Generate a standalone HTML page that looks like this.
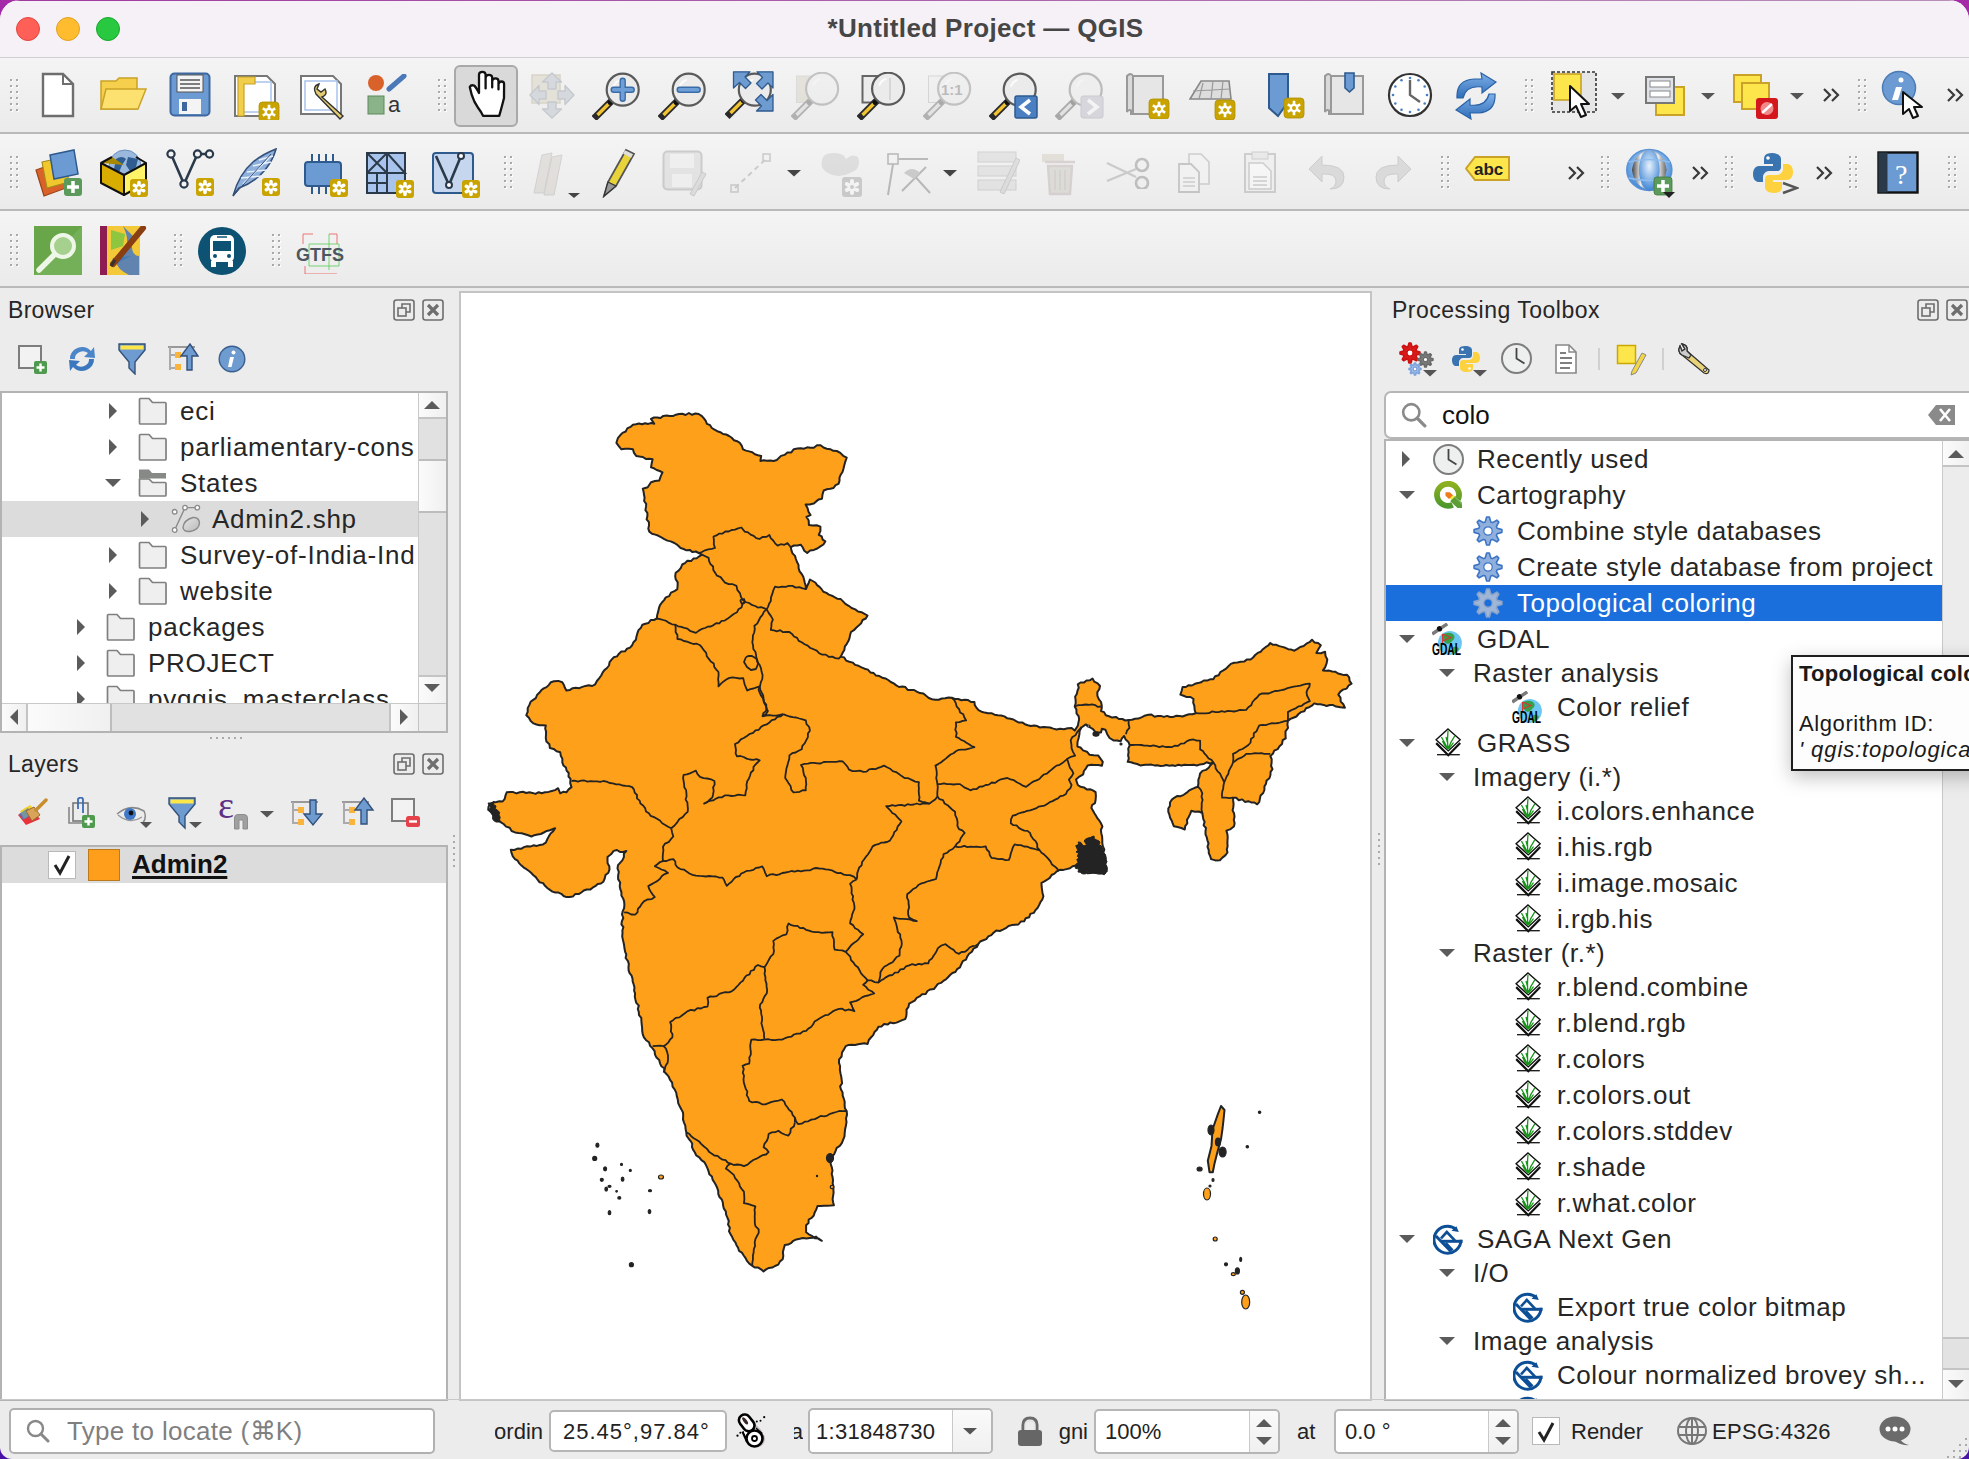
<!DOCTYPE html><html><head><meta charset="utf-8"><style>
*{margin:0;padding:0;box-sizing:border-box}
html,body{width:1969px;height:1459px;overflow:hidden;background:linear-gradient(180deg,#a52aa8 0,#8a1fb0 40%,#4a12a8 100%);font-family:"Liberation Sans",sans-serif;color:#222}
.a{position:absolute}
#win{position:absolute;left:0;top:0;width:1969px;height:1459px;background:#ececec;border-radius:20px 20px 12px 12px;overflow:hidden}
#title{position:absolute;left:0;top:0;width:1969px;height:58px;background:#f6f1f6;border-bottom:1px solid #d0d0d0}
#title .t{position:absolute;left:0;width:1969px;top:13px;text-align:center;font-weight:bold;font-size:26px;color:#464646;letter-spacing:0.35px;padding-left:2px}
.tl{position:absolute;top:17px;width:24px;height:24px;border-radius:50%}
.tb{position:absolute;left:0;width:1969px;background:linear-gradient(#f4f4f4,#ebebeb);border-bottom:2px solid #b9b9b9}
.grip{position:absolute;width:10px;height:36px;background-image:radial-gradient(circle,#c4c4c4 1.4px,transparent 1.8px);background-size:7px 6px}
.t26{position:absolute;white-space:nowrap;font-size:26px;letter-spacing:0.55px;color:#262626;line-height:36px;height:36px}
.t22{position:absolute;white-space:nowrap;font-size:22px;color:#262626;line-height:30px}
.box{position:absolute;background:#fff;border:2px solid #b3b3b3}
.sb{position:absolute;background:linear-gradient(90deg,#fbfbfb,#f0f0f0)}
</style></head><body><div id="win"><div id="title"><div class="t">*Untitled Project — QGIS</div><div class="tl" style="left:16px;background:#fe5f57;border:1px solid #e1463f"></div><div class="tl" style="left:56px;background:#febc2e;border:1px solid #e0a023"></div><div class="tl" style="left:96px;background:#28c840;border:1px solid #16a82c"></div></div><div class="tb" style="top:58px;height:76px"></div><div class="tb" style="top:134px;height:77px"></div><div class="tb" style="top:211px;height:77px"></div><svg class="a" style="left:9px;top:78px" width="12" height="36"><rect x="2" y="2" width="2" height="2" fill="#fff"/><rect x="1" y="1" width="2" height="2" fill="#a9a9a9"/><rect x="8" y="2" width="2" height="2" fill="#fff"/><rect x="7" y="1" width="2" height="2" fill="#a9a9a9"/><rect x="2" y="8" width="2" height="2" fill="#fff"/><rect x="1" y="7" width="2" height="2" fill="#a9a9a9"/><rect x="8" y="8" width="2" height="2" fill="#fff"/><rect x="7" y="7" width="2" height="2" fill="#a9a9a9"/><rect x="2" y="14" width="2" height="2" fill="#fff"/><rect x="1" y="13" width="2" height="2" fill="#a9a9a9"/><rect x="8" y="14" width="2" height="2" fill="#fff"/><rect x="7" y="13" width="2" height="2" fill="#a9a9a9"/><rect x="2" y="20" width="2" height="2" fill="#fff"/><rect x="1" y="19" width="2" height="2" fill="#a9a9a9"/><rect x="8" y="20" width="2" height="2" fill="#fff"/><rect x="7" y="19" width="2" height="2" fill="#a9a9a9"/><rect x="2" y="26" width="2" height="2" fill="#fff"/><rect x="1" y="25" width="2" height="2" fill="#a9a9a9"/><rect x="8" y="26" width="2" height="2" fill="#fff"/><rect x="7" y="25" width="2" height="2" fill="#a9a9a9"/><rect x="2" y="32" width="2" height="2" fill="#fff"/><rect x="1" y="31" width="2" height="2" fill="#a9a9a9"/><rect x="8" y="32" width="2" height="2" fill="#fff"/><rect x="7" y="31" width="2" height="2" fill="#a9a9a9"/></svg><svg class="a" style="left:41px;top:72px" width="34" height="46" viewBox="0 0 34 46"><path d="M2 2 H22 L32 12 V44 H2 Z" fill="#fff" stroke="#6e6e6e" stroke-width="2.4"/><path d="M22 2 V12 H32" fill="none" stroke="#6e6e6e" stroke-width="2"/></svg><svg class="a" style="left:100px;top:75px" width="48" height="38" viewBox="0 0 48 38"><path d="M1 6 H16 L19 3 H37 V34 H1 Z" fill="#f6d04d" stroke="#c9a227" stroke-width="1.5"/><path d="M6 14 H46 L38 34 H1 Z" fill="#fce070" stroke="#c9a227" stroke-width="1.5"/></svg><svg class="a" style="left:169px;top:72px" width="42" height="45" viewBox="0 0 42 45"><rect x="1.5" y="1.5" width="39" height="42" rx="4" fill="#6b9bd2" stroke="#3d679e" stroke-width="2"/><rect x="8" y="3" width="26" height="17" fill="#f4f4f4" stroke="#555" stroke-width="1"/><path d="M11 8 H31 M11 12 H31 M11 16 H31" stroke="#555" stroke-width="1.5"/><rect x="10" y="27" width="22" height="15" fill="#f4f4f4"/><rect x="13" y="30" width="5" height="9" fill="#3d679e"/></svg><svg class="a" style="left:233px;top:74px" width="48" height="46" viewBox="0 0 48 46"><path d="M2 2 H34 L42 10 V42 H2 Z" fill="#fff" stroke="#777" stroke-width="2"/><rect x="6" y="8" width="32" height="30" fill="none" stroke="#a9c4ec" stroke-width="1.5"/><path d="M5 3 H22 V10 H11 V42 H5 Z" fill="#f2cf4a" stroke="#c9a227" stroke-width="1.2"/><rect x="26.0" y="28.0" width="20" height="20" rx="3.5" fill="#c9a400" stroke="#b08f00" stroke-width="0.8"/><path d="M36.0 38.0 L42.2 41.6 M36.0 38.0 L36.0 45.2 M36.0 38.0 L29.8 41.6 M36.0 38.0 L29.8 34.4 M36.0 38.0 L36.0 30.8 M36.0 38.0 L42.2 34.4 " stroke="#fff" stroke-width="2.6"/><circle cx="36" cy="38" r="4.4" fill="#fff"/><circle cx="36" cy="38" r="2.0" fill="#c9a400"/></svg><svg class="a" style="left:299px;top:74px" width="48" height="46" viewBox="0 0 48 46"><path d="M2 2 H34 L42 10 V40 H2 Z" fill="#fff" stroke="#777" stroke-width="2"/><rect x="6" y="7" width="32" height="29" fill="none" stroke="#a9c4ec" stroke-width="1.5"/><path d="M17 20 Q13 12 20 10 L18 15 L22 18 L26 15 Q29 21 23 23 L44 42 L41 45 Z" fill="#e3cb72" stroke="#333" stroke-width="1.4"/></svg><svg class="a" style="left:366px;top:74px" width="44" height="42" viewBox="0 0 44 42"><circle cx="10" cy="9" r="8" fill="#d9622b"/><path d="M23 15 L38 2" stroke="#4a78b8" stroke-width="5" stroke-linecap="round"/><rect x="2" y="22" width="16" height="18" fill="#8ab38a" stroke="#5c8a5c" stroke-width="1"/><text x="22" y="38" font-family="Liberation Sans" font-size="22" fill="#333">a</text></svg><svg class="a" style="left:437px;top:78px" width="12" height="36"><rect x="2" y="2" width="2" height="2" fill="#fff"/><rect x="1" y="1" width="2" height="2" fill="#a9a9a9"/><rect x="8" y="2" width="2" height="2" fill="#fff"/><rect x="7" y="1" width="2" height="2" fill="#a9a9a9"/><rect x="2" y="8" width="2" height="2" fill="#fff"/><rect x="1" y="7" width="2" height="2" fill="#a9a9a9"/><rect x="8" y="8" width="2" height="2" fill="#fff"/><rect x="7" y="7" width="2" height="2" fill="#a9a9a9"/><rect x="2" y="14" width="2" height="2" fill="#fff"/><rect x="1" y="13" width="2" height="2" fill="#a9a9a9"/><rect x="8" y="14" width="2" height="2" fill="#fff"/><rect x="7" y="13" width="2" height="2" fill="#a9a9a9"/><rect x="2" y="20" width="2" height="2" fill="#fff"/><rect x="1" y="19" width="2" height="2" fill="#a9a9a9"/><rect x="8" y="20" width="2" height="2" fill="#fff"/><rect x="7" y="19" width="2" height="2" fill="#a9a9a9"/><rect x="2" y="26" width="2" height="2" fill="#fff"/><rect x="1" y="25" width="2" height="2" fill="#a9a9a9"/><rect x="8" y="26" width="2" height="2" fill="#fff"/><rect x="7" y="25" width="2" height="2" fill="#a9a9a9"/><rect x="2" y="32" width="2" height="2" fill="#fff"/><rect x="1" y="31" width="2" height="2" fill="#a9a9a9"/><rect x="8" y="32" width="2" height="2" fill="#fff"/><rect x="7" y="31" width="2" height="2" fill="#a9a9a9"/></svg><div class="a" style="left:454px;top:65px;width:64px;height:62px;border-radius:6px;background:#d9d9d9;border:2px solid #a9a9a9"></div><svg class="a" style="left:463px;top:70px" width="46" height="50" viewBox="0 0 46 50"><path d="M20 45.8 L36.2 45.8 Q38 40 41 28 L41.1 14 Q41 11.5 38.5 11.5 Q36 11.5 35.5 14 L35.5 19.4 L35.5 11 Q35.5 8.3 32.5 8.3 Q29.5 8.3 29.2 11 L29.2 17.4 L29.2 7.5 Q29 4.8 26 4.8 Q23 4.8 22.6 7.5 L22.6 18.4 L22.6 4.5 Q22.5 1.8 19.3 1.8 Q16.2 1.8 16 4.5 L16 23 Q13 17 11 15.5 Q8 14.5 6.8 17 Q8 24 11.4 31.6 Q15 38 18 42 Z" fill="#fff" stroke="#111" stroke-width="2.3" stroke-linejoin="round"/></svg><svg class="a" style="left:528px;top:71px" width="50" height="50" viewBox="0 0 50 50"><rect x="4" y="4" width="28" height="28" fill="#e4e1d8" stroke="#d8d4c8" stroke-width="1.5"/><g fill="#d5d9dd" stroke="#c5c9cd" stroke-width="1.4" stroke-linejoin="round"><path d="M24 2 L33.5 11 H28 V18 H20 V11 H14.5 Z"/><path d="M24 47 L33.5 38 H28 V31 H20 V38 H14.5 Z"/><path d="M2 24 L11 14.5 V20 H18 V28 H11 V33.5 Z"/><path d="M46 24 L37 14.5 V20 H30 V28 H37 V33.5 Z"/></g></svg><svg class="a" style="left:592px;top:72px" width="50" height="48" viewBox="0 0 50 48"><path d="M4.5 44 L18 30.5" stroke="#2a2a2a" stroke-width="7" stroke-linecap="square"/><path d="M5.5 43 L16.5 32" stroke="#f1c232" stroke-width="3.4"/><circle cx="18" cy="30.5" r="2.4" fill="#111"/><circle cx="30.7" cy="17.7" r="16" fill="#ebebeb" stroke="#5a5a5a" stroke-width="2.2"/><path d="M21.7 14.7 A11 11 0 0 1 28.7 7.699999999999999" stroke="#fff" stroke-width="2" fill="none" opacity="0.8"/><path d="M21.7 17.7 H39.7 M30.7 8.7 V26.7" stroke="#3b6ca8" stroke-width="6.4" stroke-linecap="round"/><path d="M21.7 17.7 H39.7 M30.7 8.7 V26.7" stroke="#6e9fd6" stroke-width="3.6" stroke-linecap="round"/></svg><svg class="a" style="left:658px;top:72px" width="50" height="48" viewBox="0 0 50 48"><path d="M4.5 44 L18 30.5" stroke="#2a2a2a" stroke-width="7" stroke-linecap="square"/><path d="M5.5 43 L16.5 32" stroke="#f1c232" stroke-width="3.4"/><circle cx="18" cy="30.5" r="2.4" fill="#111"/><circle cx="30.7" cy="17.7" r="16" fill="#ebebeb" stroke="#5a5a5a" stroke-width="2.2"/><path d="M21.7 14.7 A11 11 0 0 1 28.7 7.699999999999999" stroke="#fff" stroke-width="2" fill="none" opacity="0.8"/><path d="M21.7 17.7 H39.7" stroke="#3b6ca8" stroke-width="6.4" stroke-linecap="round"/><path d="M21.7 17.7 H39.7" stroke="#6e9fd6" stroke-width="3.6" stroke-linecap="round"/></svg><svg class="a" style="left:725px;top:70px" width="50" height="50" viewBox="0 0 50 50"><path d="M4.5 44 L18 30.5" stroke="#2a2a2a" stroke-width="7" stroke-linecap="square"/><path d="M5.5 43 L16.5 32" stroke="#f1c232" stroke-width="3.4"/><circle cx="18" cy="30.5" r="2.4" fill="#111"/><circle cx="29.8" cy="19.7" r="16" fill="#ebebeb" stroke="#5a5a5a" stroke-width="2.2"/><path d="M20.8 16.7 A11 11 0 0 1 27.8 9.7" stroke="#fff" stroke-width="2" fill="none" opacity="0.8"/><g fill="#6e9bd0" stroke="#2e5a8e" stroke-width="1.3" stroke-linejoin="round"><path d="M8.5 1.8 H25 L20 7 L26 13 L20.5 18.5 L14.5 12.5 L8.5 18 Z"/><path d="M48 1.8 V18 L43 13 L37 19 L31.5 13.5 L37.5 7.5 L32 1.8 Z"/><path d="M48 41 H31.5 L36.5 36 L30.5 30 L36 24.5 L42 30.5 L48 24.5 Z"/></g></svg><svg class="a" style="left:791px;top:72px" width="50" height="48" viewBox="0 0 50 48"><g opacity="0.3"><rect x="5.5" y="4" width="26.5" height="26.5" fill="#c7c2a6" stroke="#aaa"/><path d="M4.5 44 L18 30.5" stroke="#2a2a2a" stroke-width="7" stroke-linecap="square"/><path d="M5.5 43 L16.5 32" stroke="#ccc" stroke-width="3.4"/><circle cx="18" cy="30.5" r="2.4" fill="#111"/><circle cx="31.1" cy="16.7" r="16" fill="#ebebeb" stroke="#5a5a5a" stroke-width="2.2"/><path d="M22.1 13.7 A11 11 0 0 1 29.1 6.699999999999999" stroke="#fff" stroke-width="2" fill="none" opacity="0.8"/></g></svg><svg class="a" style="left:857px;top:72px" width="50" height="48" viewBox="0 0 50 48"><rect x="5.5" y="4" width="26.5" height="26.5" fill="#ececec" stroke="#666" stroke-width="2"/><path d="M4.5 44 L18 30.5" stroke="#2a2a2a" stroke-width="7" stroke-linecap="square"/><path d="M5.5 43 L16.5 32" stroke="#f1c232" stroke-width="3.4"/><circle cx="18" cy="30.5" r="2.4" fill="#111"/><circle cx="31.1" cy="16.7" r="16" fill="#ebebeb" stroke="#5a5a5a" stroke-width="2.2"/><path d="M22.1 13.7 A11 11 0 0 1 29.1 6.699999999999999" stroke="#fff" stroke-width="2" fill="none" opacity="0.8"/><path d="M33 6 V28" stroke="#cfcfcf" stroke-width="1.5"/></svg><svg class="a" style="left:923px;top:72px" width="50" height="48" viewBox="0 0 50 48"><g opacity="0.3"><rect x="5.5" y="4" width="26.5" height="26.5" fill="#eee" stroke="#999"/><path d="M4.5 44 L18 30.5" stroke="#2a2a2a" stroke-width="7" stroke-linecap="square"/><path d="M5.5 43 L16.5 32" stroke="#ccc" stroke-width="3.4"/><circle cx="18" cy="30.5" r="2.4" fill="#111"/><circle cx="31.1" cy="16.7" r="16" fill="#ebebeb" stroke="#5a5a5a" stroke-width="2.2"/><path d="M22.1 13.7 A11 11 0 0 1 29.1 6.699999999999999" stroke="#fff" stroke-width="2" fill="none" opacity="0.8"/><text x="18" y="23" font-family="Liberation Sans" font-weight="bold" font-size="15" fill="#444">1:1</text></g></svg><svg class="a" style="left:989px;top:72px" width="50" height="48" viewBox="0 0 50 48"><path d="M4.5 44 L18 30.5" stroke="#2a2a2a" stroke-width="7" stroke-linecap="square"/><path d="M5.5 43 L16.5 32" stroke="#f1c232" stroke-width="3.4"/><circle cx="18" cy="30.5" r="2.4" fill="#111"/><circle cx="30.7" cy="17.7" r="16" fill="#ebebeb" stroke="#5a5a5a" stroke-width="2.2"/><path d="M21.7 14.7 A11 11 0 0 1 28.7 7.699999999999999" stroke="#fff" stroke-width="2" fill="none" opacity="0.8"/><rect x="26" y="24" width="22" height="22" rx="2" fill="#4a7fc1" stroke="#2e5a8e" stroke-width="1.5"/><path d="M41 28 L32 35 L41 42" fill="none" stroke="#fff" stroke-width="3.5"/></svg><svg class="a" style="left:1055px;top:72px" width="50" height="48" viewBox="0 0 50 48"><g opacity="0.35"><path d="M4.5 44 L18 30.5" stroke="#2a2a2a" stroke-width="7" stroke-linecap="square"/><path d="M5.5 43 L16.5 32" stroke="#ccc" stroke-width="3.4"/><circle cx="18" cy="30.5" r="2.4" fill="#111"/><circle cx="30.7" cy="17.7" r="16" fill="#ebebeb" stroke="#5a5a5a" stroke-width="2.2"/><path d="M21.7 14.7 A11 11 0 0 1 28.7 7.699999999999999" stroke="#fff" stroke-width="2" fill="none" opacity="0.8"/><rect x="26" y="24" width="22" height="22" rx="2" fill="#aab" stroke="#889"/><path d="M33 28 L42 35 L33 42" fill="none" stroke="#fff" stroke-width="3.5"/></g></svg><svg class="a" style="left:1125px;top:72px" width="46" height="47" viewBox="0 0 46 47"><path d="M6 4 H38 V42 H6 Z" fill="#e6e6e6" stroke="#999" stroke-width="2"/><path d="M2 4 Q6 0 8 4 V40 Q4 36 2 40 Z" fill="#d9d9d9" stroke="#999" stroke-width="2"/><rect x="24.0" y="27.0" width="20" height="20" rx="3.5" fill="#c9a400" stroke="#b08f00" stroke-width="0.8"/><path d="M34.0 37.0 L40.2 40.6 M34.0 37.0 L34.0 44.2 M34.0 37.0 L27.8 40.6 M34.0 37.0 L27.8 33.4 M34.0 37.0 L34.0 29.8 M34.0 37.0 L40.2 33.4 " stroke="#fff" stroke-width="2.6"/><circle cx="34" cy="37" r="4.4" fill="#fff"/><circle cx="34" cy="37" r="2.0" fill="#c9a400"/></svg><svg class="a" style="left:1189px;top:75px" width="48" height="45" viewBox="0 0 48 45"><path d="M1 24 L12 6 L40 6 L42 24 Z" fill="#ddd" stroke="#888" stroke-width="1.6"/><path d="M14 8 L10 24 M24 6 L22 24 M34 6 L32 24 M4 16 L41 14" stroke="#999" stroke-width="1.2"/><rect x="26.0" y="25.0" width="20" height="20" rx="3.5" fill="#c9a400" stroke="#b08f00" stroke-width="0.8"/><path d="M36.0 35.0 L42.2 38.6 M36.0 35.0 L36.0 42.2 M36.0 35.0 L29.8 38.6 M36.0 35.0 L29.8 31.4 M36.0 35.0 L36.0 27.8 M36.0 35.0 L42.2 31.4 " stroke="#fff" stroke-width="2.6"/><circle cx="36" cy="35" r="4.4" fill="#fff"/><circle cx="36" cy="35" r="2.0" fill="#c9a400"/></svg><svg class="a" style="left:1266px;top:72px" width="40" height="47" viewBox="0 0 40 47"><path d="M3 2 H22 V30 L12 44 L3 36 Z" fill="#6b9bd2" stroke="#2e5a8e" stroke-width="2"/><rect x="18.0" y="26.0" width="20" height="20" rx="3.5" fill="#c9a400" stroke="#b08f00" stroke-width="0.8"/><path d="M28.0 36.0 L34.2 39.6 M28.0 36.0 L28.0 43.2 M28.0 36.0 L21.8 39.6 M28.0 36.0 L21.8 32.4 M28.0 36.0 L28.0 28.8 M28.0 36.0 L34.2 32.4 " stroke="#fff" stroke-width="2.6"/><circle cx="28" cy="36" r="4.4" fill="#fff"/><circle cx="28" cy="36" r="2.0" fill="#c9a400"/></svg><svg class="a" style="left:1323px;top:72px" width="44" height="47" viewBox="0 0 44 47"><path d="M6 4 H40 V42 H6 Z" fill="#e6e6e6" stroke="#999" stroke-width="2"/><path d="M2 4 Q6 0 8 4 V40 Q4 36 2 40 Z" fill="#d9d9d9" stroke="#999" stroke-width="2"/><path d="M22 1 H31 V16 L26.5 20 L22 16 Z" fill="#6b9bd2" stroke="#2e5a8e" stroke-width="1.6"/></svg><svg class="a" style="left:1387px;top:72px" width="46" height="46" viewBox="0 0 46 46"><circle cx="23" cy="23" r="21" fill="#fff" stroke="#333" stroke-width="2.2"/><circle cx="40.0" cy="23.0" r="1.3" fill="#4a7fc1"/><circle cx="37.7" cy="31.5" r="1.3" fill="#4a7fc1"/><circle cx="31.5" cy="37.7" r="1.3" fill="#4a7fc1"/><circle cx="23.0" cy="40.0" r="1.3" fill="#4a7fc1"/><circle cx="14.5" cy="37.7" r="1.3" fill="#4a7fc1"/><circle cx="8.3" cy="31.5" r="1.3" fill="#4a7fc1"/><circle cx="6.0" cy="23.0" r="1.3" fill="#4a7fc1"/><circle cx="8.3" cy="14.5" r="1.3" fill="#4a7fc1"/><circle cx="14.5" cy="8.3" r="1.3" fill="#4a7fc1"/><circle cx="23.0" cy="6.0" r="1.3" fill="#4a7fc1"/><circle cx="31.5" cy="8.3" r="1.3" fill="#4a7fc1"/><circle cx="37.7" cy="14.5" r="1.3" fill="#4a7fc1"/><path d="M23 8 V23 L33 30" fill="none" stroke="#666" stroke-width="2.4"/></svg><svg class="a" style="left:1454px;top:72px" width="44" height="48" viewBox="0 0 44 48"><defs><linearGradient id="rf" x1="0" y1="0" x2="0" y2="1"><stop offset="0" stop-color="#7fb0e8"/><stop offset="1" stop-color="#2f6db8"/></linearGradient></defs><path d="M3 26 Q2 8 20 7 L28 7 L27 1 L42 10 L28 21 L28 15 Q12 13 9 26 Z" fill="url(#rf)" stroke="#2a63a8" stroke-width="1.2"/><path d="M41 22 Q42 40 24 41 L16 41 L17 47 L2 38 L16 27 L16 33 Q32 35 35 22 Z" fill="url(#rf)" stroke="#2a63a8" stroke-width="1.2"/></svg><svg class="a" style="left:1524px;top:78px" width="12" height="36"><rect x="2" y="2" width="2" height="2" fill="#fff"/><rect x="1" y="1" width="2" height="2" fill="#a9a9a9"/><rect x="8" y="2" width="2" height="2" fill="#fff"/><rect x="7" y="1" width="2" height="2" fill="#a9a9a9"/><rect x="2" y="8" width="2" height="2" fill="#fff"/><rect x="1" y="7" width="2" height="2" fill="#a9a9a9"/><rect x="8" y="8" width="2" height="2" fill="#fff"/><rect x="7" y="7" width="2" height="2" fill="#a9a9a9"/><rect x="2" y="14" width="2" height="2" fill="#fff"/><rect x="1" y="13" width="2" height="2" fill="#a9a9a9"/><rect x="8" y="14" width="2" height="2" fill="#fff"/><rect x="7" y="13" width="2" height="2" fill="#a9a9a9"/><rect x="2" y="20" width="2" height="2" fill="#fff"/><rect x="1" y="19" width="2" height="2" fill="#a9a9a9"/><rect x="8" y="20" width="2" height="2" fill="#fff"/><rect x="7" y="19" width="2" height="2" fill="#a9a9a9"/><rect x="2" y="26" width="2" height="2" fill="#fff"/><rect x="1" y="25" width="2" height="2" fill="#a9a9a9"/><rect x="8" y="26" width="2" height="2" fill="#fff"/><rect x="7" y="25" width="2" height="2" fill="#a9a9a9"/><rect x="2" y="32" width="2" height="2" fill="#fff"/><rect x="1" y="31" width="2" height="2" fill="#a9a9a9"/><rect x="8" y="32" width="2" height="2" fill="#fff"/><rect x="7" y="31" width="2" height="2" fill="#a9a9a9"/></svg><svg class="a" style="left:1551px;top:71px" width="50" height="50" viewBox="0 0 50 50"><rect x="1" y="1" width="44" height="40" fill="#e6e6e6" stroke="#333" stroke-width="1.6" stroke-dasharray="3 2"/><rect x="3" y="3" width="27" height="26" fill="#fde54c" stroke="#c9a227" stroke-width="1.6"/><path d="M19 15 L19 40 L25 35 L30 46 L35 44 L30 33 L38 33 Z" fill="#fff" stroke="#111" stroke-width="2" stroke-linejoin="round"/></svg><svg class="a" style="left:1610px;top:92px" width="16" height="8" viewBox="0 0 16 8"><path d="M1 1 L15 1 L8 7.5 Z" fill="#555"/></svg><svg class="a" style="left:1644px;top:75px" width="42" height="42" viewBox="0 0 42 42"><rect x="12" y="12" width="28" height="28" fill="#fde54c" stroke="#c9a227" stroke-width="2"/><rect x="2" y="2" width="28" height="26" fill="#dfe3e8" stroke="#777" stroke-width="2"/><rect x="6" y="6" width="20" height="6" fill="#fff" stroke="#888"/><rect x="6" y="16" width="20" height="6" fill="#fff" stroke="#888"/></svg><svg class="a" style="left:1700px;top:92px" width="16" height="8" viewBox="0 0 16 8"><path d="M1 1 L15 1 L8 7.5 Z" fill="#555"/></svg><svg class="a" style="left:1732px;top:73px" width="48" height="47" viewBox="0 0 48 47"><rect x="2" y="2" width="27" height="27" fill="#fde54c" stroke="#c9a227" stroke-width="2"/><rect x="10" y="10" width="27" height="26" fill="#fde54c" stroke="#c9a227" stroke-width="2"/><rect x="24" y="25" width="22" height="21" rx="3" fill="#d4171c"/><circle cx="35" cy="35.5" r="6.5" fill="#f08a8a"/><path d="M30 40 L40 31" stroke="#fff" stroke-width="2.5"/></svg><svg class="a" style="left:1789px;top:92px" width="16" height="8" viewBox="0 0 16 8"><path d="M1 1 L15 1 L8 7.5 Z" fill="#555"/></svg><svg class="a" style="left:1822px;top:88px" width="18" height="14" viewBox="0 0 18 14"><path d="M2 1 L8 7 L2 13 M10 1 L16 7 L10 13" fill="none" stroke="#3a3a3a" stroke-width="2.2"/></svg><svg class="a" style="left:1857px;top:78px" width="12" height="36"><rect x="2" y="2" width="2" height="2" fill="#fff"/><rect x="1" y="1" width="2" height="2" fill="#a9a9a9"/><rect x="8" y="2" width="2" height="2" fill="#fff"/><rect x="7" y="1" width="2" height="2" fill="#a9a9a9"/><rect x="2" y="8" width="2" height="2" fill="#fff"/><rect x="1" y="7" width="2" height="2" fill="#a9a9a9"/><rect x="8" y="8" width="2" height="2" fill="#fff"/><rect x="7" y="7" width="2" height="2" fill="#a9a9a9"/><rect x="2" y="14" width="2" height="2" fill="#fff"/><rect x="1" y="13" width="2" height="2" fill="#a9a9a9"/><rect x="8" y="14" width="2" height="2" fill="#fff"/><rect x="7" y="13" width="2" height="2" fill="#a9a9a9"/><rect x="2" y="20" width="2" height="2" fill="#fff"/><rect x="1" y="19" width="2" height="2" fill="#a9a9a9"/><rect x="8" y="20" width="2" height="2" fill="#fff"/><rect x="7" y="19" width="2" height="2" fill="#a9a9a9"/><rect x="2" y="26" width="2" height="2" fill="#fff"/><rect x="1" y="25" width="2" height="2" fill="#a9a9a9"/><rect x="8" y="26" width="2" height="2" fill="#fff"/><rect x="7" y="25" width="2" height="2" fill="#a9a9a9"/><rect x="2" y="32" width="2" height="2" fill="#fff"/><rect x="1" y="31" width="2" height="2" fill="#a9a9a9"/><rect x="8" y="32" width="2" height="2" fill="#fff"/><rect x="7" y="31" width="2" height="2" fill="#a9a9a9"/></svg><svg class="a" style="left:1881px;top:70px" width="50" height="50" viewBox="0 0 50 50"><circle cx="18" cy="18" r="16.5" fill="#6b9bd2" stroke="#4d7bb6" stroke-width="1.5"/><path d="M15 17 H21 L17 30 H11 Z" fill="#fff"/><circle cx="20" cy="10" r="2.5" fill="#fff"/><path d="M22 22 L22 44 L28 39 L32 48 L37 46 L33 37 L41 37 Z" fill="#fff" stroke="#111" stroke-width="2" stroke-linejoin="round"/></svg><svg class="a" style="left:1946px;top:88px" width="18" height="14" viewBox="0 0 18 14"><path d="M2 1 L8 7 L2 13 M10 1 L16 7 L10 13" fill="none" stroke="#3a3a3a" stroke-width="2.2"/></svg><svg class="a" style="left:9px;top:155px" width="12" height="36"><rect x="2" y="2" width="2" height="2" fill="#fff"/><rect x="1" y="1" width="2" height="2" fill="#a9a9a9"/><rect x="8" y="2" width="2" height="2" fill="#fff"/><rect x="7" y="1" width="2" height="2" fill="#a9a9a9"/><rect x="2" y="8" width="2" height="2" fill="#fff"/><rect x="1" y="7" width="2" height="2" fill="#a9a9a9"/><rect x="8" y="8" width="2" height="2" fill="#fff"/><rect x="7" y="7" width="2" height="2" fill="#a9a9a9"/><rect x="2" y="14" width="2" height="2" fill="#fff"/><rect x="1" y="13" width="2" height="2" fill="#a9a9a9"/><rect x="8" y="14" width="2" height="2" fill="#fff"/><rect x="7" y="13" width="2" height="2" fill="#a9a9a9"/><rect x="2" y="20" width="2" height="2" fill="#fff"/><rect x="1" y="19" width="2" height="2" fill="#a9a9a9"/><rect x="8" y="20" width="2" height="2" fill="#fff"/><rect x="7" y="19" width="2" height="2" fill="#a9a9a9"/><rect x="2" y="26" width="2" height="2" fill="#fff"/><rect x="1" y="25" width="2" height="2" fill="#a9a9a9"/><rect x="8" y="26" width="2" height="2" fill="#fff"/><rect x="7" y="25" width="2" height="2" fill="#a9a9a9"/><rect x="2" y="32" width="2" height="2" fill="#fff"/><rect x="1" y="31" width="2" height="2" fill="#a9a9a9"/><rect x="8" y="32" width="2" height="2" fill="#fff"/><rect x="7" y="31" width="2" height="2" fill="#a9a9a9"/></svg><svg class="a" style="left:34px;top:148px" width="50" height="50" viewBox="0 0 50 50"><path d="M2 22 L24 14 L32 40 L10 48 Z" fill="#d9622b" stroke="#9c4418" stroke-width="1.2"/><path d="M8 14 L30 9 L35 34 L13 40 Z" fill="#f0c82e" stroke="#a88a1a" stroke-width="1.2"/><path d="M16 7 L40 2 L44 26 L20 31 Z" fill="#6b9bd2" stroke="#2e5a8e" stroke-width="1.5"/><rect x="30" y="30" width="18" height="18" rx="3" fill="#5b9a5b"/><path d="M39 33 V45 M33 39 H45" stroke="#fff" stroke-width="3.5"/></svg><svg class="a" style="left:100px;top:149px" width="50" height="48" viewBox="0 0 50 48"><circle cx="25" cy="17" r="16" fill="#9ab8dc" stroke="#6a8fc0" stroke-width="1"/><path d="M16 10 Q22 6 26 10 L22 16 L18 26 L14 20 Z M28 8 L38 10 L36 18 L30 22 L26 16Z M30 26 L34 24 L34 30 Z" fill="#2f5d91"/><path d="M1 14 L12 8 L24 16 L1 14 Z" fill="#a88a00"/><path d="M1 14 L24 26 L24 46 L1 34 Z" fill="#d9ad00" stroke="#111" stroke-width="2" stroke-linejoin="round"/><path d="M24 26 L46 14 L46 34 L24 46 Z" fill="#fff36a" stroke="#111" stroke-width="2" stroke-linejoin="round"/><path d="M1 14 L12 8 M46 14 L36 8" stroke="#111" stroke-width="2"/><rect x="30.0" y="30.0" width="18" height="18" rx="3" fill="#c9a400"/><path d="M39.0 33.6 L39.0 44.4 M43.7 36.3 L34.3 41.7 M43.7 41.7 L34.3 36.3 " stroke="#fff" stroke-width="3.6" stroke-linecap="round"/><circle cx="39" cy="39" r="1.8" fill="#c9a400"/></svg><svg class="a" style="left:166px;top:148px" width="50" height="50" viewBox="0 0 50 50"><path d="M5 6 L18 36 L31.5 6 H43.5" fill="none" stroke="#2b3a4a" stroke-width="2.6"/><circle cx="5" cy="6" r="3.6" fill="#f4f4f4" stroke="#2b3a4a" stroke-width="2.2"/><circle cx="31.5" cy="6" r="3.6" fill="#f4f4f4" stroke="#2b3a4a" stroke-width="2.2"/><circle cx="43.5" cy="6" r="3.6" fill="#f4f4f4" stroke="#2b3a4a" stroke-width="2.2"/><circle cx="18" cy="36" r="3.6" fill="#f4f4f4" stroke="#2b3a4a" stroke-width="2.2"/><rect x="30.0" y="30.0" width="18" height="18" rx="3" fill="#c9a400"/><path d="M39.0 33.6 L39.0 44.4 M43.7 36.3 L34.3 41.7 M43.7 41.7 L34.3 36.3 " stroke="#fff" stroke-width="3.6" stroke-linecap="round"/><circle cx="39" cy="39" r="1.8" fill="#c9a400"/></svg><svg class="a" style="left:231px;top:148px" width="50" height="50" viewBox="0 0 50 50"><path d="M2 48 Q8 26 22 14 Q32 6 45 1 Q42 12 34 22 Q24 34 8 40 Z" fill="#8fb0dd" stroke="#33507a" stroke-width="1.6"/><path d="M12 36 L38 10 M10 30 L30 28 M16 24 L36 22 M22 18 L40 14 M28 12 L42 8" stroke="#e8f0fa" stroke-width="1.4"/><path d="M3 47 L40 6" stroke="#33507a" stroke-width="1"/><rect x="31.0" y="30.0" width="18" height="18" rx="3" fill="#c9a400"/><path d="M40.0 33.6 L40.0 44.4 M44.7 36.3 L35.3 41.7 M44.7 41.7 L35.3 36.3 " stroke="#fff" stroke-width="3.6" stroke-linecap="round"/><circle cx="40" cy="39" r="1.8" fill="#c9a400"/></svg><svg class="a" style="left:302px;top:152px" width="46" height="46" viewBox="0 0 46 46"><rect x="3" y="10" width="36" height="24" rx="3" fill="#6b9bd2" stroke="#2e5a8e" stroke-width="2"/><path d="M10 2 V10 M17 2 V10 M24 2 V10 M31 2 V10 M10 34 V42 M17 34 V42 M24 34 V42" stroke="#2e5a8e" stroke-width="2"/><rect x="28.0" y="27.0" width="18" height="18" rx="3" fill="#c9a400"/><path d="M37.0 30.6 L37.0 41.4 M41.7 33.3 L32.3 38.7 M41.7 38.7 L32.3 33.3 " stroke="#fff" stroke-width="3.6" stroke-linecap="round"/><circle cx="37" cy="36" r="1.8" fill="#c9a400"/></svg><svg class="a" style="left:365px;top:151px" width="50" height="48" viewBox="0 0 50 48"><rect x="2" y="2" width="38" height="40" fill="#a9c4ec" stroke="#2b3a4a" stroke-width="2"/><path d="M2 2 L22 22 M22 2 L2 22 M22 2 V42 M2 22 H40 L22 2 M2 32 H22 M12 22 V42 M22 22 H40" stroke="#2b3a4a" stroke-width="2" fill="none"/><rect x="31.0" y="29.0" width="18" height="18" rx="3" fill="#c9a400"/><path d="M40.0 32.6 L40.0 43.4 M44.7 35.3 L35.3 40.7 M44.7 40.7 L35.3 35.3 " stroke="#fff" stroke-width="3.6" stroke-linecap="round"/><circle cx="40" cy="38" r="1.8" fill="#c9a400"/></svg><svg class="a" style="left:431px;top:151px" width="50" height="48" viewBox="0 0 50 48"><rect x="2" y="2" width="40" height="40" rx="3" fill="#c5d6ee" stroke="#2e5a8e" stroke-width="2"/><path d="M5 5 L18 34 L30 5" fill="none" stroke="#2b3a4a" stroke-width="2.6"/><circle cx="18" cy="34" r="3" fill="#fff" stroke="#2b3a4a" stroke-width="2"/><circle cx="30" cy="5" r="3" fill="#fff" stroke="#2b3a4a" stroke-width="2"/><rect x="31.0" y="29.0" width="18" height="18" rx="3" fill="#c9a400"/><path d="M40.0 32.6 L40.0 43.4 M44.7 35.3 L35.3 40.7 M44.7 40.7 L35.3 35.3 " stroke="#fff" stroke-width="3.6" stroke-linecap="round"/><circle cx="40" cy="38" r="1.8" fill="#c9a400"/></svg><svg class="a" style="left:503px;top:155px" width="12" height="36"><rect x="2" y="2" width="2" height="2" fill="#fff"/><rect x="1" y="1" width="2" height="2" fill="#a9a9a9"/><rect x="8" y="2" width="2" height="2" fill="#fff"/><rect x="7" y="1" width="2" height="2" fill="#a9a9a9"/><rect x="2" y="8" width="2" height="2" fill="#fff"/><rect x="1" y="7" width="2" height="2" fill="#a9a9a9"/><rect x="8" y="8" width="2" height="2" fill="#fff"/><rect x="7" y="7" width="2" height="2" fill="#a9a9a9"/><rect x="2" y="14" width="2" height="2" fill="#fff"/><rect x="1" y="13" width="2" height="2" fill="#a9a9a9"/><rect x="8" y="14" width="2" height="2" fill="#fff"/><rect x="7" y="13" width="2" height="2" fill="#a9a9a9"/><rect x="2" y="20" width="2" height="2" fill="#fff"/><rect x="1" y="19" width="2" height="2" fill="#a9a9a9"/><rect x="8" y="20" width="2" height="2" fill="#fff"/><rect x="7" y="19" width="2" height="2" fill="#a9a9a9"/><rect x="2" y="26" width="2" height="2" fill="#fff"/><rect x="1" y="25" width="2" height="2" fill="#a9a9a9"/><rect x="8" y="26" width="2" height="2" fill="#fff"/><rect x="7" y="25" width="2" height="2" fill="#a9a9a9"/><rect x="2" y="32" width="2" height="2" fill="#fff"/><rect x="1" y="31" width="2" height="2" fill="#a9a9a9"/><rect x="8" y="32" width="2" height="2" fill="#fff"/><rect x="7" y="31" width="2" height="2" fill="#a9a9a9"/></svg><svg class="a" style="left:530px;top:149px" width="52" height="50" viewBox="0 0 52 50"><g opacity="0.35"><path d="M4 44 L12 6 L22 4 L14 44 Z M14 46 L22 8 L32 6 L24 46 Z" fill="#c8c0b8" stroke="#999"/></g><path d="M38 44 H50 L44 49 Z" fill="#444"/></svg><svg class="a" style="left:600px;top:148px" width="36" height="50" viewBox="0 0 36 50"><path d="M4 48 L8 34 L26 2 L34 6 L16 38 Z" fill="#e8d33a" stroke="#555" stroke-width="1.8"/><path d="M4 48 L8 34 L16 38 Z" fill="#999" stroke="#333" stroke-width="1.2"/><path d="M24 4 L32 8" stroke="#ddd" stroke-width="4"/></svg><svg class="a" style="left:662px;top:150px" width="46" height="48" viewBox="0 0 46 48"><g opacity="0.35"><rect x="1.5" y="1.5" width="38" height="38" rx="4" fill="#ccc" stroke="#888" stroke-width="2"/><rect x="8" y="4" width="24" height="14" fill="#eee"/><rect x="10" y="24" width="20" height="13" fill="#eee"/><path d="M28 44 L40 22 L44 24 L32 46 Z" fill="#bbb" stroke="#888"/></g></svg><svg class="a" style="left:729px;top:152px" width="44" height="42" viewBox="0 0 44 42"><g opacity="0.35"><path d="M6 36 L38 6" stroke="#888" stroke-width="2" stroke-dasharray="5 4"/><rect x="2" y="33" width="7" height="7" fill="none" stroke="#888" stroke-width="1.6"/><rect x="34" y="2" width="7" height="7" fill="none" stroke="#888" stroke-width="1.6"/></g></svg><svg class="a" style="left:786px;top:169px" width="16" height="8" viewBox="0 0 16 8"><path d="M1 1 L15 1 L8 7.5 Z" fill="#444"/></svg><svg class="a" style="left:818px;top:151px" width="48" height="46" viewBox="0 0 48 46"><g opacity="0.35"><path d="M4 10 Q4 2 16 2 Q26 2 28 8 Q34 2 40 6 Q44 18 32 22 Q20 28 10 22 Q2 18 4 10 Z" fill="#bbb"/><rect x="24.0" y="26.0" width="20" height="20" rx="3" fill="#888"/><path d="M34.0 30.0 L34.0 42.0 M39.2 33.0 L28.8 39.0 M39.2 39.0 L28.8 33.0 " stroke="#fff" stroke-width="4.0" stroke-linecap="round"/><circle cx="34" cy="36" r="2.0" fill="#888"/></g></svg><svg class="a" style="left:886px;top:151px" width="46" height="46" viewBox="0 0 46 46"><g opacity="0.35"><rect x="2" y="3" width="10" height="10" fill="none" stroke="#555" stroke-width="1.6"/><path d="M7 13 L2 44 M12 8 H42 M16 40 L40 16 M24 20 L44 42" stroke="#555" stroke-width="2"/><path d="M18 22 Q26 14 34 22 L28 28 Z" fill="#888"/></g></svg><svg class="a" style="left:942px;top:169px" width="16" height="8" viewBox="0 0 16 8"><path d="M1 1 L15 1 L8 7.5 Z" fill="#444"/></svg><svg class="a" style="left:976px;top:150px" width="44" height="44" viewBox="0 0 44 44"><g opacity="0.35"><rect x="2" y="2" width="38" height="10" fill="#ccc" stroke="#999"/><rect x="2" y="16" width="38" height="10" fill="#ccc" stroke="#999"/><rect x="2" y="30" width="38" height="10" fill="#ccc" stroke="#999"/><path d="M24 42 L40 8 L44 10 L28 44 Z" fill="#bbb" stroke="#888"/></g></svg><svg class="a" style="left:1041px;top:152px" width="38" height="44" viewBox="0 0 38 44"><g opacity="0.35"><rect x="1" y="2" width="22" height="8" fill="#c8bfae"/><path d="M4 10 H34 M7 14 H31 L29 42 H9 Z" fill="#bba" stroke="#a99" stroke-width="2.4"/><path d="M14 18 V38 M19 18 V38 M24 18 V38" stroke="#a99" stroke-width="2"/></g></svg><svg class="a" style="left:1106px;top:157px" width="46" height="32" viewBox="0 0 46 32"><g opacity="0.35"><path d="M1 6 L30 20 M1 24 L30 12" stroke="#888" stroke-width="2.4"/><circle cx="36" cy="8" r="6" fill="none" stroke="#666" stroke-width="2.6"/><circle cx="36" cy="26" r="6" fill="none" stroke="#666" stroke-width="2.6"/></g></svg><svg class="a" style="left:1177px;top:152px" width="34" height="42" viewBox="0 0 34 42"><g opacity="0.4"><path d="M12 2 H24 L32 10 V32 H12 Z" fill="#f4f4f4" stroke="#999" stroke-width="1.6"/><path d="M2 12 H14 L22 20 V40 H2 Z" fill="#f4f4f4" stroke="#888" stroke-width="1.8"/><path d="M6 26 H18 M6 30 H18 M6 34 H18" stroke="#999" stroke-width="1.5"/></g></svg><svg class="a" style="left:1243px;top:151px" width="34" height="42" viewBox="0 0 34 42"><g opacity="0.4"><rect x="2" y="3" width="30" height="38" fill="#eee" stroke="#999" stroke-width="2"/><rect x="9" y="1" width="16" height="7" fill="#ddd" stroke="#999"/><path d="M6 12 H20 L28 20 V38 H6 Z" fill="#fff" stroke="#999" stroke-width="1.5"/><path d="M10 26 H24 M10 30 H24 M10 34 H24" stroke="#999" stroke-width="1.4"/></g></svg><svg class="a" style="left:1308px;top:155px" width="38" height="36" viewBox="0 0 38 36"><g opacity="0.4"><path d="M14 1 L1 14 L14 27 V19 Q28 18 28 26 Q28 32 22 34 Q36 34 36 22 Q36 10 14 10 Z" fill="#bbb" stroke="#999"/></g></svg><svg class="a" style="left:1374px;top:155px" width="38" height="36" viewBox="0 0 38 36"><g opacity="0.4"><path d="M24 1 L37 14 L24 27 V19 Q10 18 10 26 Q10 32 16 34 Q2 34 2 22 Q2 10 24 10 Z" fill="#bbb" stroke="#999"/></g></svg><svg class="a" style="left:1440px;top:155px" width="12" height="36"><rect x="2" y="2" width="2" height="2" fill="#fff"/><rect x="1" y="1" width="2" height="2" fill="#a9a9a9"/><rect x="8" y="2" width="2" height="2" fill="#fff"/><rect x="7" y="1" width="2" height="2" fill="#a9a9a9"/><rect x="2" y="8" width="2" height="2" fill="#fff"/><rect x="1" y="7" width="2" height="2" fill="#a9a9a9"/><rect x="8" y="8" width="2" height="2" fill="#fff"/><rect x="7" y="7" width="2" height="2" fill="#a9a9a9"/><rect x="2" y="14" width="2" height="2" fill="#fff"/><rect x="1" y="13" width="2" height="2" fill="#a9a9a9"/><rect x="8" y="14" width="2" height="2" fill="#fff"/><rect x="7" y="13" width="2" height="2" fill="#a9a9a9"/><rect x="2" y="20" width="2" height="2" fill="#fff"/><rect x="1" y="19" width="2" height="2" fill="#a9a9a9"/><rect x="8" y="20" width="2" height="2" fill="#fff"/><rect x="7" y="19" width="2" height="2" fill="#a9a9a9"/><rect x="2" y="26" width="2" height="2" fill="#fff"/><rect x="1" y="25" width="2" height="2" fill="#a9a9a9"/><rect x="8" y="26" width="2" height="2" fill="#fff"/><rect x="7" y="25" width="2" height="2" fill="#a9a9a9"/><rect x="2" y="32" width="2" height="2" fill="#fff"/><rect x="1" y="31" width="2" height="2" fill="#a9a9a9"/><rect x="8" y="32" width="2" height="2" fill="#fff"/><rect x="7" y="31" width="2" height="2" fill="#a9a9a9"/></svg><svg class="a" style="left:1465px;top:156px" width="46" height="26" viewBox="0 0 46 26"><path d="M10 1 H44 V24 H10 L1 12.5 Z" fill="#fde54c" stroke="#c9a227" stroke-width="2"/><text x="9" y="19" font-family="Liberation Sans" font-weight="bold" font-size="17" fill="#222">abc</text></svg><svg class="a" style="left:1567px;top:166px" width="18" height="14" viewBox="0 0 18 14"><path d="M2 1 L8 7 L2 13 M10 1 L16 7 L10 13" fill="none" stroke="#3a3a3a" stroke-width="2.2"/></svg><svg class="a" style="left:1600px;top:155px" width="12" height="36"><rect x="2" y="2" width="2" height="2" fill="#fff"/><rect x="1" y="1" width="2" height="2" fill="#a9a9a9"/><rect x="8" y="2" width="2" height="2" fill="#fff"/><rect x="7" y="1" width="2" height="2" fill="#a9a9a9"/><rect x="2" y="8" width="2" height="2" fill="#fff"/><rect x="1" y="7" width="2" height="2" fill="#a9a9a9"/><rect x="8" y="8" width="2" height="2" fill="#fff"/><rect x="7" y="7" width="2" height="2" fill="#a9a9a9"/><rect x="2" y="14" width="2" height="2" fill="#fff"/><rect x="1" y="13" width="2" height="2" fill="#a9a9a9"/><rect x="8" y="14" width="2" height="2" fill="#fff"/><rect x="7" y="13" width="2" height="2" fill="#a9a9a9"/><rect x="2" y="20" width="2" height="2" fill="#fff"/><rect x="1" y="19" width="2" height="2" fill="#a9a9a9"/><rect x="8" y="20" width="2" height="2" fill="#fff"/><rect x="7" y="19" width="2" height="2" fill="#a9a9a9"/><rect x="2" y="26" width="2" height="2" fill="#fff"/><rect x="1" y="25" width="2" height="2" fill="#a9a9a9"/><rect x="8" y="26" width="2" height="2" fill="#fff"/><rect x="7" y="25" width="2" height="2" fill="#a9a9a9"/><rect x="2" y="32" width="2" height="2" fill="#fff"/><rect x="1" y="31" width="2" height="2" fill="#a9a9a9"/><rect x="8" y="32" width="2" height="2" fill="#fff"/><rect x="7" y="31" width="2" height="2" fill="#a9a9a9"/></svg><svg class="a" style="left:1626px;top:148px" width="52" height="52" viewBox="0 0 52 52"><defs><linearGradient id="gl" x1="0" y1="0" x2="1" y2="0"><stop offset="0" stop-color="#444"/><stop offset="0.5" stop-color="#eee"/><stop offset="1" stop-color="#666"/></linearGradient><radialGradient id="gb" cx="0.5" cy="0.4" r="0.6"><stop offset="0" stop-color="#e8f2fc"/><stop offset="1" stop-color="#3f86d6"/></radialGradient></defs><ellipse cx="23.3" cy="22" rx="22.5" ry="20.5" fill="url(#gb)" stroke="#5a92d8" stroke-width="1.6"/><path d="M23.3 1.5 Q8 6 6 22 Q8 38 23.3 42.5 Q13 34 13 22 Q13 10 23.3 1.5 Z" fill="url(#gl)"/><path d="M23.3 1.5 Q38.6 6 40.6 22 Q38.6 38 23.3 42.5 Q33.6 34 33.6 22 Q33.6 10 23.3 1.5 Z" fill="url(#gl)"/><ellipse cx="23.3" cy="22" rx="10.3" ry="20.5" fill="url(#gb)" opacity="0.9"/><path d="M2.5 14 Q23 9 44 14 M2.5 30 Q23 35 44 30" fill="none" stroke="#8dbcef" stroke-width="1.6"/><rect x="28" y="29" width="18" height="18" rx="3" fill="#5b9a5b" stroke="#3f7a3f" stroke-width="0.8"/><path d="M37 32 V44 M31 38 H43" stroke="#fff" stroke-width="3.5"/><path d="M37 44 L49 44 L43 50 Z" fill="#222"/></svg><svg class="a" style="left:1691px;top:166px" width="18" height="14" viewBox="0 0 18 14"><path d="M2 1 L8 7 L2 13 M10 1 L16 7 L10 13" fill="none" stroke="#3a3a3a" stroke-width="2.2"/></svg><svg class="a" style="left:1724px;top:155px" width="12" height="36"><rect x="2" y="2" width="2" height="2" fill="#fff"/><rect x="1" y="1" width="2" height="2" fill="#a9a9a9"/><rect x="8" y="2" width="2" height="2" fill="#fff"/><rect x="7" y="1" width="2" height="2" fill="#a9a9a9"/><rect x="2" y="8" width="2" height="2" fill="#fff"/><rect x="1" y="7" width="2" height="2" fill="#a9a9a9"/><rect x="8" y="8" width="2" height="2" fill="#fff"/><rect x="7" y="7" width="2" height="2" fill="#a9a9a9"/><rect x="2" y="14" width="2" height="2" fill="#fff"/><rect x="1" y="13" width="2" height="2" fill="#a9a9a9"/><rect x="8" y="14" width="2" height="2" fill="#fff"/><rect x="7" y="13" width="2" height="2" fill="#a9a9a9"/><rect x="2" y="20" width="2" height="2" fill="#fff"/><rect x="1" y="19" width="2" height="2" fill="#a9a9a9"/><rect x="8" y="20" width="2" height="2" fill="#fff"/><rect x="7" y="19" width="2" height="2" fill="#a9a9a9"/><rect x="2" y="26" width="2" height="2" fill="#fff"/><rect x="1" y="25" width="2" height="2" fill="#a9a9a9"/><rect x="8" y="26" width="2" height="2" fill="#fff"/><rect x="7" y="25" width="2" height="2" fill="#a9a9a9"/><rect x="2" y="32" width="2" height="2" fill="#fff"/><rect x="1" y="31" width="2" height="2" fill="#a9a9a9"/><rect x="8" y="32" width="2" height="2" fill="#fff"/><rect x="7" y="31" width="2" height="2" fill="#a9a9a9"/></svg><svg class="a" style="left:1753px;top:152px" width="46" height="44" viewBox="0 0 46 44"><path d="M19 1 C11 1 11 5 11 8 V12 H20 V14 H6 C2 14 0 18 0 22 C0 28 3 30 6 30 H10 V25 C10 22 13 19 16 19 H24 C27 19 28 17 28 15 V7 C28 4 25 1 19 1 Z" fill="#3a74b0"/><path d="M21 41 C29 41 29 37 29 34 V30 H20 V28 H34 C38 28 40 24 40 20 C40 14 37 12 34 12 H30 V17 C30 20 27 23 24 23 H16 C13 23 12 25 12 27 V35 C12 38 15 41 21 41 Z" fill="#fdd23e"/><circle cx="15" cy="6" r="1.8" fill="#fff"/><path d="M30 31 L44 36 L30 41" fill="none" stroke="#555" stroke-width="2.5"/></svg><svg class="a" style="left:1815px;top:166px" width="18" height="14" viewBox="0 0 18 14"><path d="M2 1 L8 7 L2 13 M10 1 L16 7 L10 13" fill="none" stroke="#3a3a3a" stroke-width="2.2"/></svg><svg class="a" style="left:1848px;top:155px" width="12" height="36"><rect x="2" y="2" width="2" height="2" fill="#fff"/><rect x="1" y="1" width="2" height="2" fill="#a9a9a9"/><rect x="8" y="2" width="2" height="2" fill="#fff"/><rect x="7" y="1" width="2" height="2" fill="#a9a9a9"/><rect x="2" y="8" width="2" height="2" fill="#fff"/><rect x="1" y="7" width="2" height="2" fill="#a9a9a9"/><rect x="8" y="8" width="2" height="2" fill="#fff"/><rect x="7" y="7" width="2" height="2" fill="#a9a9a9"/><rect x="2" y="14" width="2" height="2" fill="#fff"/><rect x="1" y="13" width="2" height="2" fill="#a9a9a9"/><rect x="8" y="14" width="2" height="2" fill="#fff"/><rect x="7" y="13" width="2" height="2" fill="#a9a9a9"/><rect x="2" y="20" width="2" height="2" fill="#fff"/><rect x="1" y="19" width="2" height="2" fill="#a9a9a9"/><rect x="8" y="20" width="2" height="2" fill="#fff"/><rect x="7" y="19" width="2" height="2" fill="#a9a9a9"/><rect x="2" y="26" width="2" height="2" fill="#fff"/><rect x="1" y="25" width="2" height="2" fill="#a9a9a9"/><rect x="8" y="26" width="2" height="2" fill="#fff"/><rect x="7" y="25" width="2" height="2" fill="#a9a9a9"/><rect x="2" y="32" width="2" height="2" fill="#fff"/><rect x="1" y="31" width="2" height="2" fill="#a9a9a9"/><rect x="8" y="32" width="2" height="2" fill="#fff"/><rect x="7" y="31" width="2" height="2" fill="#a9a9a9"/></svg><svg class="a" style="left:1877px;top:151px" width="42" height="43" viewBox="0 0 42 43"><rect x="1.5" y="1.5" width="39" height="40" fill="#6b9bd2" stroke="#111" stroke-width="2.4"/><rect x="1.5" y="1.5" width="9" height="40" fill="#2b3a4a"/><text x="18" y="33" font-family="Liberation Serif" font-size="28" fill="#fff">?</text></svg><svg class="a" style="left:1947px;top:155px" width="12" height="36"><rect x="2" y="2" width="2" height="2" fill="#fff"/><rect x="1" y="1" width="2" height="2" fill="#a9a9a9"/><rect x="8" y="2" width="2" height="2" fill="#fff"/><rect x="7" y="1" width="2" height="2" fill="#a9a9a9"/><rect x="2" y="8" width="2" height="2" fill="#fff"/><rect x="1" y="7" width="2" height="2" fill="#a9a9a9"/><rect x="8" y="8" width="2" height="2" fill="#fff"/><rect x="7" y="7" width="2" height="2" fill="#a9a9a9"/><rect x="2" y="14" width="2" height="2" fill="#fff"/><rect x="1" y="13" width="2" height="2" fill="#a9a9a9"/><rect x="8" y="14" width="2" height="2" fill="#fff"/><rect x="7" y="13" width="2" height="2" fill="#a9a9a9"/><rect x="2" y="20" width="2" height="2" fill="#fff"/><rect x="1" y="19" width="2" height="2" fill="#a9a9a9"/><rect x="8" y="20" width="2" height="2" fill="#fff"/><rect x="7" y="19" width="2" height="2" fill="#a9a9a9"/><rect x="2" y="26" width="2" height="2" fill="#fff"/><rect x="1" y="25" width="2" height="2" fill="#a9a9a9"/><rect x="8" y="26" width="2" height="2" fill="#fff"/><rect x="7" y="25" width="2" height="2" fill="#a9a9a9"/><rect x="2" y="32" width="2" height="2" fill="#fff"/><rect x="1" y="31" width="2" height="2" fill="#a9a9a9"/><rect x="8" y="32" width="2" height="2" fill="#fff"/><rect x="7" y="31" width="2" height="2" fill="#a9a9a9"/></svg><svg class="a" style="left:9px;top:233px" width="12" height="36"><rect x="2" y="2" width="2" height="2" fill="#fff"/><rect x="1" y="1" width="2" height="2" fill="#a9a9a9"/><rect x="8" y="2" width="2" height="2" fill="#fff"/><rect x="7" y="1" width="2" height="2" fill="#a9a9a9"/><rect x="2" y="8" width="2" height="2" fill="#fff"/><rect x="1" y="7" width="2" height="2" fill="#a9a9a9"/><rect x="8" y="8" width="2" height="2" fill="#fff"/><rect x="7" y="7" width="2" height="2" fill="#a9a9a9"/><rect x="2" y="14" width="2" height="2" fill="#fff"/><rect x="1" y="13" width="2" height="2" fill="#a9a9a9"/><rect x="8" y="14" width="2" height="2" fill="#fff"/><rect x="7" y="13" width="2" height="2" fill="#a9a9a9"/><rect x="2" y="20" width="2" height="2" fill="#fff"/><rect x="1" y="19" width="2" height="2" fill="#a9a9a9"/><rect x="8" y="20" width="2" height="2" fill="#fff"/><rect x="7" y="19" width="2" height="2" fill="#a9a9a9"/><rect x="2" y="26" width="2" height="2" fill="#fff"/><rect x="1" y="25" width="2" height="2" fill="#a9a9a9"/><rect x="8" y="26" width="2" height="2" fill="#fff"/><rect x="7" y="25" width="2" height="2" fill="#a9a9a9"/><rect x="2" y="32" width="2" height="2" fill="#fff"/><rect x="1" y="31" width="2" height="2" fill="#a9a9a9"/><rect x="8" y="32" width="2" height="2" fill="#fff"/><rect x="7" y="31" width="2" height="2" fill="#a9a9a9"/></svg><svg class="a" style="left:34px;top:226px" width="48" height="49" viewBox="0 0 48 49"><rect x="0" y="0" width="48" height="49" fill="#73b057"/><path d="M0 0 H48 L0 49 Z" fill="#62a040" opacity="0.6"/><circle cx="29" cy="20" r="11" fill="#a6d08e" stroke="#eef6e8" stroke-width="4"/><path d="M20 29 L5 44" stroke="#eef6e8" stroke-width="5.5" stroke-linecap="round"/></svg><svg class="a" style="left:99px;top:226px" width="50" height="50" viewBox="0 0 50 50"><rect x="1" y="0" width="40" height="49" fill="#f3c93a"/><path d="M1 0 H8 V49 H1 Z" fill="#8c1c52"/><path d="M12 4 L26 8 L24 20 L12 24 Z" fill="#8ec63f"/><path d="M24 0 Q34 20 20 30 Q12 40 30 49 H40 V30 Q30 30 34 10 Z" fill="#4577c4" opacity="0.85"/><path d="M14 32 L12 40 L32 30 Z" fill="#3c7db8"/><path d="M14 38 L44 2" stroke="#8a3f12" stroke-width="6" stroke-linecap="round"/><path d="M12 40 L16 34" stroke="#333" stroke-width="3"/></svg><svg class="a" style="left:173px;top:233px" width="12" height="36"><rect x="2" y="2" width="2" height="2" fill="#fff"/><rect x="1" y="1" width="2" height="2" fill="#a9a9a9"/><rect x="8" y="2" width="2" height="2" fill="#fff"/><rect x="7" y="1" width="2" height="2" fill="#a9a9a9"/><rect x="2" y="8" width="2" height="2" fill="#fff"/><rect x="1" y="7" width="2" height="2" fill="#a9a9a9"/><rect x="8" y="8" width="2" height="2" fill="#fff"/><rect x="7" y="7" width="2" height="2" fill="#a9a9a9"/><rect x="2" y="14" width="2" height="2" fill="#fff"/><rect x="1" y="13" width="2" height="2" fill="#a9a9a9"/><rect x="8" y="14" width="2" height="2" fill="#fff"/><rect x="7" y="13" width="2" height="2" fill="#a9a9a9"/><rect x="2" y="20" width="2" height="2" fill="#fff"/><rect x="1" y="19" width="2" height="2" fill="#a9a9a9"/><rect x="8" y="20" width="2" height="2" fill="#fff"/><rect x="7" y="19" width="2" height="2" fill="#a9a9a9"/><rect x="2" y="26" width="2" height="2" fill="#fff"/><rect x="1" y="25" width="2" height="2" fill="#a9a9a9"/><rect x="8" y="26" width="2" height="2" fill="#fff"/><rect x="7" y="25" width="2" height="2" fill="#a9a9a9"/><rect x="2" y="32" width="2" height="2" fill="#fff"/><rect x="1" y="31" width="2" height="2" fill="#a9a9a9"/><rect x="8" y="32" width="2" height="2" fill="#fff"/><rect x="7" y="31" width="2" height="2" fill="#a9a9a9"/></svg><svg class="a" style="left:197px;top:226px" width="50" height="50" viewBox="0 0 50 50"><circle cx="25" cy="25" r="24" fill="#0d5272"/><rect x="13" y="9" width="24" height="27" rx="5" fill="#fff"/><rect x="16" y="15" width="18" height="10" fill="#0d5272"/><path d="M20 11 H30" stroke="#0d5272" stroke-width="1.5"/><circle cx="18" cy="30" r="2" fill="#0d5272"/><circle cx="32" cy="30" r="2" fill="#0d5272"/><rect x="14" y="35" width="5" height="6" fill="#fff"/><rect x="31" y="35" width="5" height="6" fill="#fff"/></svg><svg class="a" style="left:271px;top:233px" width="12" height="36"><rect x="2" y="2" width="2" height="2" fill="#fff"/><rect x="1" y="1" width="2" height="2" fill="#a9a9a9"/><rect x="8" y="2" width="2" height="2" fill="#fff"/><rect x="7" y="1" width="2" height="2" fill="#a9a9a9"/><rect x="2" y="8" width="2" height="2" fill="#fff"/><rect x="1" y="7" width="2" height="2" fill="#a9a9a9"/><rect x="8" y="8" width="2" height="2" fill="#fff"/><rect x="7" y="7" width="2" height="2" fill="#a9a9a9"/><rect x="2" y="14" width="2" height="2" fill="#fff"/><rect x="1" y="13" width="2" height="2" fill="#a9a9a9"/><rect x="8" y="14" width="2" height="2" fill="#fff"/><rect x="7" y="13" width="2" height="2" fill="#a9a9a9"/><rect x="2" y="20" width="2" height="2" fill="#fff"/><rect x="1" y="19" width="2" height="2" fill="#a9a9a9"/><rect x="8" y="20" width="2" height="2" fill="#fff"/><rect x="7" y="19" width="2" height="2" fill="#a9a9a9"/><rect x="2" y="26" width="2" height="2" fill="#fff"/><rect x="1" y="25" width="2" height="2" fill="#a9a9a9"/><rect x="8" y="26" width="2" height="2" fill="#fff"/><rect x="7" y="25" width="2" height="2" fill="#a9a9a9"/><rect x="2" y="32" width="2" height="2" fill="#fff"/><rect x="1" y="31" width="2" height="2" fill="#a9a9a9"/><rect x="8" y="32" width="2" height="2" fill="#fff"/><rect x="7" y="31" width="2" height="2" fill="#a9a9a9"/></svg><svg class="a" style="left:295px;top:230px" width="50" height="44" viewBox="0 0 50 44"><path d="M8 4 V14 M8 4 H18 M34 4 H42 V14 M10 36 V44 H42" stroke="#e55" stroke-width="0.8" fill="none"/><path d="M34 4 V40 M14 14 H44 V36 H14 Z" stroke="#5c5" stroke-width="0.8" fill="none"/><text x="1" y="31" font-family="Liberation Sans" font-weight="bold" font-size="19" fill="#4c5560" textLength="48" lengthAdjust="spacingAndGlyphs">GTFS</text></svg><div class="box" style="left:459px;top:291px;width:913px;height:1110px;border-color:#c4c4c4"></div><svg class="a" style="left:0;top:0" width="1969" height="1459" viewBox="0 0 1969 1459"><g stroke="#232323" stroke-width="2" stroke-linejoin="round" fill="#ffa01a"><polygon points="616.4,442.8 618.0,437.8 620.2,435.3 622.5,432.9 625.7,431.5 627.3,428.4 630.5,426.9 632.9,424.7 635.9,424.3 639.0,423.5 642.1,424.3 645.1,423.2 648.2,423.9 651.2,423.0 654.3,423.8 651.0,418.9 654.0,417.5 657.2,417.6 660.5,418.0 663.3,415.9 666.5,415.6 669.7,415.9 672.9,416.1 675.9,414.7 679.0,414.0 682.3,413.8 685.6,415.0 688.9,413.0 692.1,414.8 695.4,413.5 698.7,414.0 701.5,415.8 703.7,418.1 705.6,420.7 706.9,423.8 710.1,425.2 711.8,428.0 714.5,429.6 717.3,431.2 720.3,432.2 723.0,434.0 726.2,434.5 729.1,436.0 731.7,437.8 734.0,440.2 737.1,441.2 739.8,442.8 741.8,445.9 743.0,449.3 746.0,450.6 749.1,451.4 752.3,452.2 754.9,454.3 758.0,455.2 761.2,455.9 760.4,460.9 763.6,460.2 767.0,460.7 770.2,460.4 773.6,461.0 776.8,460.0 781.0,455.9 784.5,454.9 787.4,452.5 791.3,452.4 793.8,449.2 797.4,448.5 800.7,448.2 804.0,448.7 807.2,447.3 810.5,447.8 813.8,447.7 817.0,445.2 820.6,445.2 823.5,447.5 826.7,448.7 830.2,449.2 833.3,450.8 836.8,451.0 840.3,452.9 843.2,455.8 846.7,457.6 845.4,461.3 844.3,465.2 843.4,469.0 842.5,472.0 840.7,474.7 839.5,477.6 839.5,480.9 838.5,483.9 835.6,485.2 833.5,488.0 830.3,488.8 826.9,489.2 823.7,490.5 822.5,494.5 822.0,498.7 818.7,499.4 816.2,501.4 813.8,503.6 809.7,504.5 805.6,504.4 807.5,507.9 808.5,511.7 810.5,515.1 806.4,516.8 808.7,520.6 808.9,525.0 812.7,525.4 816.7,525.3 820.4,526.6 820.4,530.9 818.8,534.9 821.7,536.4 822.7,539.7 825.3,541.4 823.4,544.5 820.4,546.4 817.3,548.5 813.9,549.9 810.1,550.6 807.2,553.0 804.3,550.8 802.8,547.5 800.7,544.7 797.4,545.4 793.9,545.5 790.8,547.2 791.4,550.4 792.5,553.4 795.0,555.9 795.9,559.0 797.0,562.0 798.5,564.9 798.6,568.3 799.6,571.4 801.7,574.0 803.3,576.8 804.1,579.8 804.8,582.8 805.7,585.8 806.0,589.0 807.3,585.8 808.8,582.7 809.9,579.5 812.6,581.0 815.3,582.5 817.1,585.1 819.5,586.9 821.6,589.2 823.4,591.8 826.4,592.9 828.9,594.6 831.9,595.7 834.5,597.2 837.2,598.7 840.5,598.9 842.8,601.1 845.4,603.9 848.7,605.8 851.6,608.0 855.2,609.4 858.0,611.5 861.5,612.2 864.5,613.8 867.5,615.5 865.8,618.5 862.6,620.0 861.1,623.3 858.7,625.6 856.2,627.7 853.9,630.2 851.0,632.0 850.1,635.0 849.5,638.1 848.4,641.1 846.8,643.8 844.9,646.4 844.3,650.1 842.4,653.3 840.8,656.6 844.2,657.4 846.1,660.6 849.3,661.8 852.7,662.6 855.2,664.9 858.5,665.8 861.5,667.3 864.6,668.7 867.9,669.6 870.3,672.4 873.7,673.1 876.0,675.6 879.4,676.1 882.2,677.7 885.4,678.4 888.2,680.0 890.8,682.0 893.7,683.4 896.3,685.4 899.0,687.0 902.4,686.5 905.4,687.1 907.7,689.9 910.9,689.9 914.1,690.0 916.8,691.6 919.9,693.1 923.4,693.4 926.1,695.8 928.8,698.0 932.0,699.2 935.4,699.8 938.7,699.8 941.9,698.5 945.2,698.3 948.4,697.5 951.8,697.8 954.9,699.0 958.2,699.0 961.4,700.2 964.8,699.8 968.1,700.1 971.0,702.0 974.4,701.9 974.8,705.1 976.4,707.7 978.5,710.1 981.5,711.7 984.7,712.6 988.0,713.3 991.5,713.2 994.5,714.7 997.8,715.3 1001.2,715.5 1004.4,716.4 1007.3,718.3 1010.4,718.7 1013.4,719.5 1016.1,721.2 1018.9,722.6 1022.2,722.4 1024.9,724.2 1027.8,725.2 1030.8,726.0 1034.1,725.5 1037.2,726.1 1040.0,727.5 1043.4,727.1 1046.7,727.3 1050.0,727.5 1053.3,728.6 1056.6,729.5 1060.0,728.8 1063.9,729.2 1067.7,728.2 1071.6,727.9 1074.7,730.6 1077.8,725.7 1078.4,722.6 1079.1,719.5 1078.7,716.3 1076.5,713.4 1076.4,709.6 1074.7,706.5 1075.7,703.3 1075.6,700.0 1075.1,696.7 1076.8,693.9 1077.5,690.7 1078.7,687.8 1077.8,684.3 1080.5,682.5 1083.9,682.6 1086.5,680.5 1089.8,680.3 1092.5,678.5 1094.3,681.7 1097.7,683.3 1100.0,686.0 1099.3,689.3 1097.3,692.3 1097.4,695.8 1098.8,699.1 1101.0,702.0 1101.7,705.0 1101.8,708.0 1101.0,711.0 1104.1,712.1 1105.8,715.3 1109.0,716.3 1112.2,717.6 1115.9,716.9 1118.9,719.0 1122.4,719.0 1125.3,720.5 1128.6,719.9 1131.9,719.8 1135.1,718.7 1138.4,718.6 1141.9,717.1 1145.3,715.4 1148.4,714.7 1151.5,714.5 1154.6,716.7 1157.7,716.1 1160.8,715.9 1163.9,716.9 1167.1,715.9 1170.1,717.0 1173.3,716.9 1176.4,715.7 1179.5,715.9 1182.6,716.5 1185.8,715.2 1189.0,714.3 1192.5,714.2 1195.7,713.2 1194.6,709.7 1194.4,706.1 1193.2,702.7 1193.5,699.0 1190.5,697.0 1186.8,697.1 1183.6,695.8 1180.4,694.6 1181.7,690.8 1182.6,686.9 1185.9,687.0 1188.7,685.2 1192.0,685.5 1194.9,683.8 1198.0,683.1 1201.0,682.3 1203.8,680.5 1207.1,680.6 1210.1,679.3 1213.3,679.2 1215.1,676.2 1218.7,675.3 1220.3,672.1 1223.3,670.4 1226.1,668.6 1228.4,666.2 1230.8,663.9 1234.0,662.8 1237.4,662.5 1240.7,661.8 1244.1,661.6 1247.1,659.4 1250.6,659.5 1253.1,657.5 1255.2,655.0 1257.7,652.9 1260.8,651.7 1262.9,649.2 1265.5,647.2 1268.2,645.5 1270.3,643.0 1273.0,644.8 1276.4,644.8 1279.3,646.1 1282.3,646.9 1285.4,647.8 1288.2,649.2 1291.4,649.6 1294.4,650.7 1297.4,648.9 1300.2,647.0 1303.7,646.0 1306.4,643.7 1309.5,642.2 1312.0,639.7 1314.4,642.4 1318.1,642.9 1320.8,645.2 1318.5,649.0 1316.4,652.9 1320.9,653.3 1325.1,651.8 1325.5,655.9 1327.3,659.5 1326.6,663.4 1325.2,667.1 1323.0,670.4 1326.0,670.8 1329.2,670.6 1332.1,671.5 1335.2,671.7 1338.0,673.5 1341.0,674.3 1343.9,675.1 1347.1,674.8 1349.2,677.4 1349.6,680.9 1351.5,683.6 1348.6,685.5 1346.7,688.6 1343.0,689.6 1340.3,691.6 1338.3,694.6 1340.5,697.6 1340.7,701.6 1343.4,704.3 1344.9,707.7 1340.5,707.2 1336.1,706.6 1333.1,705.1 1329.9,705.0 1326.6,706.0 1323.6,704.9 1320.5,704.3 1317.3,704.2 1314.2,703.4 1311.9,705.7 1309.2,707.2 1306.0,708.2 1304.3,711.3 1301.0,712.1 1298.5,714.0 1296.4,716.5 1293.4,717.7 1290.4,718.9 1287.9,720.9 1287.4,724.4 1288.0,728.0 1285.5,731.3 1285.5,734.8 1285.7,738.4 1282.7,740.2 1282.0,744.0 1279.5,746.3 1277.7,749.1 1274.2,750.6 1272.9,753.8 1270.3,756.0 1271.7,759.2 1271.6,762.6 1271.1,766.0 1272.5,769.2 1270.6,771.8 1270.4,775.3 1269.4,778.3 1266.6,780.5 1266.0,783.8 1264.4,786.6 1264.4,790.0 1263.2,793.0 1260.6,795.4 1259.9,798.5 1259.3,801.8 1257.2,804.3 1254.4,802.5 1251.2,802.4 1248.3,801.2 1244.9,801.9 1242.3,799.4 1238.8,800.3 1236.2,797.8 1233.0,797.7 1233.2,800.9 1233.6,804.0 1233.3,807.2 1232.6,810.4 1234.1,813.5 1234.5,816.7 1233.8,819.9 1234.6,823.0 1234.1,826.2 1230.7,829.1 1226.4,830.6 1227.3,833.7 1227.7,836.8 1227.5,840.0 1227.4,843.1 1227.6,846.2 1226.8,849.4 1227.5,852.5 1225.3,855.4 1222.4,857.6 1219.9,860.2 1215.4,860.4 1211.1,859.1 1210.1,856.0 1208.8,853.1 1208.7,849.8 1207.5,846.8 1208.5,843.4 1207.4,840.3 1206.7,837.2 1205.5,834.3 1205.5,831.2 1206.0,828.0 1203.6,825.3 1204.6,821.9 1203.3,819.1 1202.8,816.0 1202.3,813.0 1198.8,811.5 1194.9,811.8 1191.3,810.8 1190.2,813.9 1188.7,816.9 1187.0,819.8 1187.3,823.4 1185.2,826.1 1184.8,829.5 1181.3,828.0 1177.6,827.0 1173.8,826.2 1172.7,823.3 1171.6,820.4 1170.1,817.7 1169.4,814.7 1168.3,811.8 1168.3,808.6 1169.9,805.9 1170.0,802.6 1171.6,799.9 1174.2,797.8 1177.0,796.1 1180.7,796.2 1183.7,794.8 1186.4,792.9 1188.9,790.7 1191.8,789.1 1194.8,787.8 1197.9,786.7 1198.4,783.4 1198.3,780.0 1199.4,776.8 1200.1,773.5 1202.4,770.9 1206.0,769.9 1208.7,767.8 1210.7,764.9 1213.3,762.6 1210.1,763.5 1206.6,762.3 1203.4,764.1 1200.1,764.4 1196.9,765.5 1193.5,764.8 1190.5,765.1 1187.5,764.9 1184.5,764.8 1181.5,765.5 1178.4,764.8 1175.4,765.9 1172.4,765.3 1169.4,765.7 1166.4,765.0 1163.4,765.8 1160.4,765.9 1157.3,765.2 1154.3,765.4 1151.3,764.6 1148.3,764.7 1145.3,764.8 1140.2,765.4 1137.2,764.0 1134.0,763.3 1131.0,762.2 1127.7,761.8 1128.8,758.6 1128.1,755.2 1128.6,752.0 1128.2,748.7 1129.7,745.5 1128.6,742.2 1125.7,739.6 1124.1,736.0 1121.9,738.4 1120.6,741.3 1117.1,740.5 1113.5,740.4 1109.6,738.0 1107.2,734.2 1105.4,729.7 1101.9,728.8 1101.0,732.4 1095.6,732.4 1093.0,729.1 1089.4,727.0 1085.8,724.4 1081.5,727.5 1079.7,730.7 1079.4,734.2 1078.7,737.7 1077.5,742.1 1077.4,746.6 1080.5,747.5 1083.0,750.4 1086.9,751.7 1089.4,754.7 1093.8,755.2 1098.3,755.6 1100.5,758.7 1102.8,761.8 1101.9,765.8 1098.3,765.0 1094.8,764.9 1091.2,764.8 1087.6,765.4 1086.0,768.3 1083.9,771.0 1083.2,774.3 1079.4,776.6 1076.0,779.6 1077.8,785.0 1080.6,786.8 1084.0,787.4 1086.7,789.4 1090.0,789.3 1092.9,790.4 1095.6,792.1 1095.9,796.0 1095.6,800.0 1095.0,803.1 1092.1,805.0 1091.4,808.0 1092.9,810.6 1094.4,813.2 1096.0,815.8 1097.5,818.4 1099.4,820.7 1101.0,823.3 1102.4,826.5 1100.9,830.0 1101.3,833.2 1102.1,836.5 1102.3,839.8 1102.3,843.1 1102.9,846.4 1104.3,849.4 1103.3,852.7 1104.9,855.7 1105.7,858.7 1105.8,861.9 1105.3,865.2 1106.9,868.1 1106.7,871.3 1103.5,871.1 1100.2,870.9 1097.2,872.3 1094.0,872.8 1090.8,872.9 1087.6,873.2 1084.9,870.9 1082.1,868.9 1079.0,867.2 1076.0,865.5 1072.7,866.2 1069.9,868.3 1066.6,869.1 1063.4,869.9 1059.8,869.8 1056.8,871.3 1054.5,873.6 1051.6,875.0 1049.8,877.9 1047.2,879.7 1044.4,881.3 1041.5,882.8 1041.6,886.2 1042.0,889.6 1042.5,892.9 1043.4,896.2 1042.4,899.3 1040.5,902.0 1039.2,904.9 1037.7,907.8 1035.5,910.1 1033.8,912.9 1030.3,913.9 1029.2,917.2 1025.7,918.2 1024.2,921.2 1020.8,921.5 1018.4,924.5 1015.0,924.7 1011.7,925.1 1008.5,926.0 1005.8,928.2 1002.9,929.7 999.9,931.0 996.2,930.6 993.5,932.7 991.3,935.1 988.3,936.4 986.3,939.1 983.3,940.3 980.2,941.5 978.2,944.2 976.7,947.2 973.4,948.7 971.9,951.7 969.1,953.7 967.3,956.4 966.0,959.6 962.8,961.1 961.3,964.2 960.0,967.4 957.1,969.2 955.4,972.0 952.4,973.0 950.1,975.0 948.0,977.2 945.9,979.4 943.3,980.9 940.9,982.9 937.9,983.9 936.0,986.4 933.9,989.1 930.3,989.4 927.5,991.0 925.7,994.0 922.0,994.3 919.6,996.4 916.7,997.8 914.7,1000.6 911.9,1002.2 909.1,1003.7 908.5,1006.8 906.5,1009.6 906.6,1012.9 906.3,1016.1 905.2,1019.1 902.3,1020.1 899.4,1021.3 896.5,1022.6 893.5,1023.3 890.1,1022.6 887.5,1024.6 884.1,1024.1 881.5,1026.4 878.4,1026.7 876.9,1029.7 874.5,1032.0 873.2,1035.1 870.9,1037.5 868.8,1040.0 867.6,1044.0 864.4,1043.3 861.3,1043.8 858.1,1044.3 855.1,1045.0 851.9,1044.7 848.7,1044.9 845.7,1046.2 844.0,1049.4 842.0,1052.5 841.6,1056.5 839.1,1059.3 839.0,1062.9 840.1,1066.3 839.9,1069.9 840.5,1073.4 841.3,1076.9 841.7,1080.1 842.1,1083.3 840.1,1086.4 841.0,1089.6 842.6,1092.4 842.7,1095.7 843.8,1098.7 844.7,1101.7 844.6,1105.0 844.9,1108.2 846.7,1111.0 847.0,1114.7 846.0,1118.4 846.5,1122.1 845.9,1125.8 845.1,1129.3 844.7,1132.8 844.5,1136.4 843.1,1139.8 841.8,1143.1 839.8,1145.9 836.7,1147.9 835.5,1151.2 834.1,1154.4 831.7,1156.9 830.8,1160.3 830.6,1163.7 831.8,1167.2 832.5,1170.6 831.7,1174.0 832.6,1177.1 833.0,1180.2 832.7,1183.4 833.5,1186.5 833.4,1189.6 833.6,1192.7 833.1,1195.9 832.6,1199.1 833.1,1202.2 833.9,1205.3 830.6,1205.6 827.3,1205.8 824.1,1205.7 820.8,1206.1 817.5,1206.0 816.4,1209.3 814.7,1212.4 813.8,1215.5 811.7,1217.8 808.7,1219.5 808.5,1223.1 806.1,1225.2 806.1,1228.8 806.1,1232.3 808.8,1234.3 811.8,1235.8 814.8,1238.2 818.7,1238.6 821.8,1240.8 818.7,1239.1 816.1,1236.6 812.9,1237.7 809.6,1238.0 806.4,1238.5 802.9,1238.0 799.7,1238.8 796.4,1239.4 793.3,1240.8 790.9,1243.2 788.1,1244.6 784.8,1245.1 783.8,1248.6 782.9,1252.1 783.3,1255.8 782.7,1259.3 780.0,1261.4 778.3,1264.6 775.0,1266.0 772.2,1267.6 768.9,1267.9 766.1,1269.4 763.5,1271.4 761.0,1269.3 758.3,1267.6 754.7,1267.5 752.1,1265.6 749.3,1263.7 747.2,1261.2 745.6,1258.2 743.7,1255.5 741.9,1252.6 739.0,1250.8 738.1,1247.8 736.5,1245.2 735.4,1242.3 733.4,1239.9 732.2,1237.1 730.7,1234.4 729.0,1231.3 729.9,1227.7 728.0,1224.6 728.8,1221.0 727.5,1217.8 726.1,1214.7 725.8,1211.3 723.9,1208.7 723.1,1205.6 722.8,1202.4 721.8,1199.5 719.5,1197.0 718.3,1194.1 718.2,1190.8 717.2,1187.9 715.9,1185.0 714.3,1182.3 712.6,1179.6 711.9,1176.5 709.3,1174.2 708.5,1171.1 707.4,1168.2 706.1,1165.3 704.3,1162.1 701.4,1160.1 699.3,1157.3 696.2,1155.4 694.9,1152.5 693.2,1149.9 692.0,1147.0 692.2,1143.5 690.4,1140.8 688.4,1138.3 686.6,1135.7 686.3,1132.4 685.6,1129.1 685.3,1125.7 684.0,1122.6 683.0,1119.4 683.2,1115.9 683.0,1112.5 681.4,1109.4 679.7,1106.3 678.2,1103.1 677.8,1099.6 676.8,1096.3 676.3,1092.8 674.8,1089.6 672.6,1086.6 672.1,1082.7 669.9,1079.7 668.7,1076.7 666.6,1074.2 664.4,1071.8 664.2,1068.2 661.3,1066.2 660.0,1063.3 659.2,1060.0 656.5,1057.6 655.0,1054.6 654.6,1051.1 652.6,1048.4 650.1,1045.9 649.0,1042.3 646.1,1040.2 643.9,1037.4 642.7,1034.2 642.2,1031.0 642.1,1027.6 641.7,1024.3 641.4,1021.1 641.3,1017.9 639.0,1015.2 638.8,1012.0 637.8,1009.0 638.8,1005.6 636.3,1002.9 635.5,999.9 634.8,996.8 635.1,993.5 634.1,990.6 634.5,987.4 633.7,984.5 632.7,981.7 632.5,978.6 631.6,975.7 629.6,973.1 628.6,970.3 628.5,967.2 628.8,963.9 627.8,960.8 625.6,958.0 626.3,954.6 625.1,951.6 624.5,948.5 624.1,945.3 623.5,942.3 622.8,939.3 622.2,936.4 622.5,933.3 622.4,930.3 623.4,927.1 621.4,924.3 621.9,921.2 623.3,918.0 622.0,914.5 622.7,911.3 624.1,908.1 624.4,904.8 624.1,901.4 623.1,898.4 621.4,895.6 621.4,892.2 620.3,889.2 619.7,886.1 620.2,882.5 618.1,879.1 618.1,875.6 618.8,871.9 617.5,868.5 618.0,865.1 620.3,862.6 622.5,860.1 623.9,857.1 623.9,853.5 626.3,851.0 623.1,852.0 620.0,851.9 616.9,850.0 613.7,850.9 611.0,854.3 607.5,857.0 607.5,860.2 607.6,863.3 609.3,866.2 609.5,869.4 608.4,872.7 605.5,875.1 604.7,878.5 603.4,881.7 600.9,883.5 597.7,884.0 595.3,886.2 592.6,887.7 590.2,889.6 586.7,889.5 583.8,890.5 581.3,892.5 578.7,894.1 575.4,893.9 572.8,896.6 569.6,896.9 566.4,897.1 563.6,896.0 561.3,893.8 558.5,892.6 555.3,892.5 552.4,891.6 549.9,889.9 547.3,888.0 545.0,885.8 543.1,883.1 539.6,882.3 537.6,879.7 535.8,877.1 533.4,875.2 531.3,873.0 529.0,871.0 526.5,869.2 523.8,867.6 521.5,865.6 519.3,863.4 517.7,860.7 515.0,859.1 512.8,856.4 511.6,853.2 510.8,849.8 514.3,850.0 517.6,848.6 521.1,848.8 524.0,847.1 527.0,846.3 530.4,846.6 533.4,845.3 536.8,845.9 539.8,845.0 543.0,844.4 545.8,842.6 547.2,839.5 548.8,836.4 550.6,833.5 553.2,831.2 555.1,828.3 549.9,830.3 546.7,830.9 543.8,832.5 540.8,834.0 537.6,834.6 534.4,835.2 531.4,836.5 528.2,835.3 525.0,834.3 521.7,833.3 518.4,832.9 515.0,832.4 511.6,831.0 509.7,827.7 506.1,826.6 503.6,824.0 500.6,822.1 496.5,818.0 493.5,815.4 491.3,812.1 488.2,809.7 488.6,806.4 490.3,803.6 493.3,802.5 496.4,802.0 499.4,801.3 502.6,801.5 504.7,798.8 505.5,795.4 506.7,792.3 509.9,791.9 513.2,792.1 516.4,793.4 519.7,792.3 522.9,791.7 526.2,793.0 529.4,792.3 532.4,792.9 535.5,793.9 538.7,792.2 541.7,793.3 545.0,792.2 548.5,791.9 551.8,791.0 555.1,790.1 558.1,788.2 560.2,793.3 563.1,791.8 566.4,792.3 568.6,789.4 571.5,787.1 570.2,783.1 570.5,778.9 568.5,776.5 568.7,773.0 566.6,770.6 565.9,767.5 563.4,765.4 562.3,762.5 562.4,758.9 560.8,755.7 560.2,752.2 556.6,751.3 553.6,748.9 549.9,748.1 549.4,744.3 546.4,741.6 545.8,737.8 546.0,734.7 546.1,731.6 545.2,728.5 545.8,725.4 542.7,725.2 539.5,725.2 536.5,724.5 533.5,723.4 530.7,721.0 528.9,717.8 526.3,715.2 527.7,711.9 527.7,708.1 529.4,704.9 530.6,701.8 533.2,699.9 535.8,698.1 537.0,695.0 539.3,692.8 541.2,690.3 543.7,688.4 546.6,687.1 548.9,684.9 550.9,682.2 554.0,681.2 558.3,680.9 562.3,682.3 563.9,684.9 564.9,687.8 566.4,690.5 569.7,690.1 572.6,688.2 575.8,687.7 579.3,688.2 582.4,686.9 585.5,685.9 588.7,685.3 592.2,686.0 595.2,684.3 596.9,681.0 599.3,678.1 601.2,675.5 602.6,672.6 604.4,670.1 607.0,668.0 609.0,665.5 609.6,662.1 611.6,659.6 613.8,657.3 617.0,656.4 619.0,653.7 621.3,651.5 625.0,651.3 627.0,648.7 630.0,647.6 632.2,645.2 633.5,642.2 635.9,639.7 636.5,636.4 637.4,633.2 638.5,630.1 641.0,627.7 642.4,624.7 645.4,623.7 648.5,623.0 650.7,620.1 654.0,620.0 656.8,618.5 657.2,615.0 658.2,611.6 658.9,608.2 660.0,605.1 661.9,602.5 664.1,600.1 665.8,597.4 669.2,596.1 671.0,592.6 674.4,591.2 677.3,589.1 677.6,585.8 677.7,582.4 675.7,579.3 675.2,576.1 675.7,572.7 678.6,570.6 680.9,567.9 682.2,564.5 685.0,563.1 687.4,560.8 691.1,561.1 693.4,558.6 696.7,558.2 699.3,556.3 702.0,554.6 698.7,553.0 695.9,551.5 692.5,552.1 689.8,549.9 686.5,550.3 683.6,549.0 680.6,548.0 677.7,545.2 674.4,543.0 670.7,541.4 667.4,540.6 664.3,539.2 661.4,537.4 658.5,535.8 655.3,534.6 652.0,533.8 649.3,531.6 648.3,528.6 649.0,525.4 648.9,522.2 646.6,519.4 647.4,516.1 647.4,513.0 645.4,510.1 646.0,506.9 646.2,503.8 644.1,501.0 644.6,497.8 644.0,494.8 643.6,491.8 642.8,488.8 647.7,487.2 651.0,482.2 655.0,481.0 659.2,480.6 660.7,476.4 662.5,472.4 659.7,471.0 656.7,470.0 654.0,468.3 651.0,467.4 651.7,463.3 652.6,459.2 649.3,458.7 645.8,458.9 642.8,457.0 639.5,456.6 636.2,455.9 634.0,452.9 632.9,449.3 629.1,448.7 625.2,448.7 621.4,449.3 618.8,446.1"/><polygon points="1221.0,1106.0 1224.5,1110.0 1223.5,1120.0 1222.6,1128.0 1221.0,1139.3 1217.7,1150.9 1214.4,1164.0 1212.8,1172.2 1209.5,1172.2 1207.8,1160.7 1211.5,1145.9 1212.5,1129.5 1217.7,1114.7"/></g><g stroke="#232323" stroke-width="1.8" fill="none" stroke-linejoin="round"><polyline points="746.0,657.0 748.9,655.9 752.0,656.0 757.0,659.0 758.0,664.0 756.0,669.0 751.0,670.0 747.0,667.0 744.0,662.0 746.0,657.0"/><polyline points="740.0,600.0 744.0,599.0 745.0,602.0 742.0,604.0 740.0,600.0"/><polyline points="698.7,553.0 701.9,552.0 705.0,550.3 708.3,549.4 711.7,548.9 715.0,548.0 713.8,544.3 713.9,540.3 713.5,536.5 716.5,535.4 719.3,533.6 722.6,533.5 725.3,531.5 728.7,531.5 731.6,530.0 735.0,529.7 738.1,528.4 741.4,527.5 744.7,531.6 748.0,532.4 750.6,534.6 753.7,535.8 756.2,538.2 759.5,539.0 762.5,537.0 766.3,536.9 769.4,534.9 770.7,538.1 773.2,540.5 775.1,543.3 777.6,545.6 780.8,544.2 784.4,544.8 787.5,543.1 790.8,547.2"/><polyline points="702.0,554.6 705.3,556.2 708.6,557.9 709.1,561.2 710.5,564.1 713.1,566.5 713.3,569.9 715.1,572.7 717.0,575.7 720.6,577.1 722.7,579.9 725.0,582.6 728.7,584.1 732.8,584.2 736.5,585.9 737.3,589.9 739.9,593.1 741.0,597.0 742.7,599.9 745.3,602.0"/><polyline points="745.3,602.0 749.1,603.0 752.3,605.2 755.2,606.0 757.8,607.6 761.1,607.2 763.9,608.2 766.7,609.4"/><polyline points="766.7,609.4 768.1,606.6 769.1,603.7 770.8,601.1 771.0,597.3 772.4,593.7 773.4,590.1 775.0,586.7 778.5,587.3 782.0,586.6 785.5,586.8 789.0,585.9 792.5,585.9 795.7,587.6 799.3,587.1 802.6,588.4 806.0,589.0"/><polyline points="766.7,609.4 768.6,612.9 771.0,616.1 772.9,619.6 771.5,622.9 771.4,626.4 770.8,629.9 773.9,630.4 776.9,631.3 780.2,630.2 783.1,632.2 786.3,631.9 789.4,632.0 792.0,633.9 794.0,636.5 797.1,637.9 798.7,640.9 801.7,642.3 804.6,644.2 807.7,645.6 810.3,648.0 813.5,649.2 816.7,650.6 819.1,653.2 822.3,654.6 825.8,654.6 828.7,656.8 832.2,656.6 835.4,658.1 838.7,658.7 840.8,656.6"/><polyline points="766.7,609.4 764.0,611.6 762.5,614.8 760.3,617.4 758.8,620.5 757.2,623.6 754.4,625.8 754.8,629.2 754.2,632.5 752.9,635.7 752.8,639.0 752.3,642.3 753.1,645.6 753.3,649.0 755.5,652.0 756.1,655.3 756.5,658.7 757.5,662.1 759.7,665.0 761.0,668.3 761.6,671.8 762.6,675.2 762.3,679.0 760.8,682.4 760.0,686.1 758.5,689.5 759.7,692.7 761.1,695.8 763.1,698.6 763.8,702.0 765.4,705.0 766.7,708.1 765.9,711.1 763.3,713.2 762.6,716.3"/><polyline points="656.8,618.5 660.0,619.1 663.2,620.0 666.3,620.9 669.1,622.9 672.0,624.3 675.3,624.7 678.1,626.3 681.3,626.9 684.3,627.8 687.4,628.6 689.9,630.8 692.9,631.8 695.9,632.9 698.9,630.6 702.1,628.8 705.0,628.0 707.7,626.7 710.8,626.5 713.5,625.1 716.1,623.2 719.3,623.3 721.6,620.9 724.7,620.6 727.8,618.6 730.8,616.3 733.7,614.0 737.0,612.3 738.5,609.2 741.5,607.5 742.5,604.0 745.3,602.0"/><polyline points="675.3,624.7 675.7,628.3 675.6,632.0 677.5,635.3 677.4,639.0 680.8,639.4 683.8,641.0 687.1,641.7 690.2,642.8 693.4,644.0 696.9,643.7 700.0,645.2 702.1,647.7 704.0,650.4 706.2,652.8 706.8,656.3 708.8,658.9 710.8,661.5 713.7,663.5 714.3,667.0 716.3,669.6 718.5,672.0 718.6,675.6 718.1,679.2 718.6,682.8 718.5,686.4 720.8,683.9 723.2,681.7 725.9,679.8 728.8,678.1 732.4,677.3 736.0,677.8 739.6,678.5 743.2,678.1 743.9,681.3 744.7,684.5 745.9,687.5 747.3,690.5 750.3,689.1 753.5,688.5 756.6,687.3 759.7,686.4 760.2,689.6 761.7,692.6 763.2,695.5 763.6,698.8 764.0,702.0 766.3,704.7 766.2,708.1 767.9,711.0 765.9,714.3 762.6,716.3 766.0,715.5 769.4,715.1 772.9,715.7 776.4,715.7 779.8,715.0 783.2,714.2"/><polyline points="571.5,781.0 574.7,780.7 577.9,781.7 581.1,780.7 584.3,780.5 587.5,781.7 590.6,781.2 593.8,781.3 597.0,781.3 600.2,781.9 603.4,781.0 606.6,781.6 609.7,783.0 612.9,783.4 616.1,784.3 619.4,784.3 622.5,785.5 625.8,785.9 629.1,786.1 632.2,787.1 634.0,789.6 634.7,792.7 637.0,795.0 637.0,798.4 639.6,800.6 640.4,803.6 643.1,805.5 645.1,808.1 646.0,811.5 648.9,813.3 650.7,815.9 654.0,817.1 657.0,818.7 659.9,820.5 662.2,823.3 665.2,825.0 668.1,826.8 671.2,828.3"/><polyline points="671.2,828.3 674.6,825.5 677.4,822.1 679.4,819.0 682.7,817.1 685.0,814.2 687.7,811.8 687.9,808.7 687.6,805.6 687.4,802.5 685.6,799.6 686.6,796.3 686.4,793.2 686.1,790.1 684.3,787.2 684.1,784.1 683.6,781.0 683.1,778.0 683.6,774.8 686.9,774.4 689.9,773.3 692.9,772.0 695.9,770.7 697.5,774.1 700.0,776.8 703.5,778.1 707.3,778.5 711.0,779.3 714.4,781.0 714.7,784.4 713.1,787.5 713.7,790.9 713.1,794.2 712.4,797.4 709.7,799.6 707.4,802.2 704.1,803.6 706.9,802.0 709.8,800.9 713.1,800.4 715.8,798.7 718.7,797.4 722.1,797.3 724.7,795.4 728.1,795.4 731.6,796.0 735.0,795.6 738.4,794.6 741.9,795.2 745.3,795.4 745.7,791.8 746.8,788.3 746.5,784.6 747.3,781.0 749.0,778.4 750.1,775.5 750.9,772.5 753.4,770.3 753.5,766.9 755.5,764.5 759.7,760.4 756.6,759.2 753.1,759.8 749.8,759.5 746.6,758.6 743.6,757.0 740.4,756.0 737.0,756.3 735.6,753.4 736.0,750.2 735.5,747.1 735.0,744.0 738.4,742.4 740.8,739.4 744.2,737.8 747.3,735.7 749.9,733.8 753.1,732.9 755.4,730.4 758.8,729.8 760.9,727.1 763.6,725.3 766.8,724.4 769.4,722.5 771.8,720.2 775.0,719.4 777.3,716.9 780.7,716.3 783.2,714.2"/><polyline points="783.2,714.2 786.3,715.4 789.5,716.5 792.8,717.1 796.2,717.5 799.4,718.5 802.6,719.3 805.8,720.4 806.5,724.1 809.2,727.0 809.9,730.7 807.9,733.5 807.9,737.2 806.3,740.2 804.8,743.2 802.4,745.8 801.7,749.2 798.6,750.7 795.6,752.5 792.2,753.2 789.4,755.4 789.3,758.7 788.3,761.9 787.5,765.1 786.5,768.2 786.0,771.5 785.5,774.7 785.2,778.0 787.1,780.7 788.8,783.6 790.7,786.3 791.3,789.8 793.5,792.4 796.6,792.2 799.7,791.8 802.6,790.2 805.8,790.3 805.7,787.2 806.3,784.1 805.9,781.1 805.8,778.0 804.0,775.0 803.3,771.5 802.9,768.0 801.0,765.0 804.4,763.8 807.9,763.6 811.0,762.9 814.2,762.9 817.4,763.4 820.6,763.5 823.7,762.0 826.9,761.8 830.1,761.8 833.3,761.8 836.5,761.9 839.6,761.1 842.8,761.5 845.1,764.0 847.4,766.6 849.0,769.7 852.5,771.1 856.1,771.2 859.9,770.6 863.4,771.8 866.6,771.7 869.1,769.3 872.2,768.9 875.4,769.1 878.3,767.9 881.2,766.9 884.0,765.6 887.0,767.3 890.1,768.7 892.7,771.1 896.1,772.1 898.9,774.0 901.7,776.1 904.5,778.0 908.3,778.2 911.7,779.9 915.2,781.6 918.9,782.1 918.6,785.2 918.9,788.3 918.7,791.4 919.0,794.4 919.5,797.5 918.9,800.6 922.3,801.8 925.8,802.5 929.2,803.7 932.2,801.6 935.2,799.5 937.4,796.5 937.3,793.4 937.5,790.3 937.8,787.2 937.4,784.1 936.9,781.0 936.2,778.0 936.8,774.8 936.7,771.7 936.2,768.6 935.4,765.6 938.2,764.1 940.9,762.5 943.3,760.5 945.8,758.6 948.2,756.5 950.6,754.5 953.5,753.2 955.9,751.2 958.8,749.8 962.0,749.7 965.3,749.6 968.3,748.8 971.4,748.0 974.4,747.1 971.5,746.0 969.0,744.3 966.4,742.8 963.9,741.0 961.1,739.9 958.7,738.0 955.9,736.8 956.7,733.2 955.3,729.6 956.2,726.0 955.9,722.4 959.4,722.2 962.7,720.9 966.2,720.4 964.4,717.6 963.3,714.3 960.1,712.4 959.1,709.1 956.7,706.6 955.8,703.2 954.3,700.2 951.8,697.8"/><polyline points="937.4,784.1 940.6,784.1 943.9,783.4 947.1,784.2 950.3,784.2 953.5,784.5 956.8,784.1 960.0,784.1 962.4,785.9 964.8,787.7 967.7,788.8 970.3,790.3 973.3,789.1 976.7,789.0 979.4,786.7 982.7,786.5 985.7,785.0 988.9,784.6 991.7,782.5 995.2,782.9 998.0,780.8 1000.9,779.3 1004.1,778.6 1007.3,778.0 1010.5,779.3 1013.9,780.2 1016.8,782.3 1019.9,783.8 1022.8,785.7 1026.1,786.9 1028.5,785.0 1031.0,783.1 1033.5,781.4 1036.6,780.4 1039.4,779.0 1041.5,776.7 1043.8,774.5 1046.9,773.7 1049.2,771.5 1051.6,769.6 1054.0,767.5 1056.5,765.6 1059.7,764.8 1062.3,763.1 1064.7,761.1 1067.1,759.1"/><polyline points="1081.4,727.0 1079.3,729.7 1077.0,732.3 1075.4,735.3 1072.2,737.2 1070.7,740.4 1071.4,744.4 1071.6,748.4 1073.1,752.1 1075.1,755.6 1070.9,756.8 1067.1,759.1 1068.9,764.5 1069.9,767.7 1072.0,770.4 1073.4,773.4 1071.4,776.7 1068.9,779.6 1070.2,782.3 1071.6,785.0 1070.3,788.4 1067.4,790.7 1066.0,794.0 1063.4,795.6 1060.3,796.1 1058.0,798.4 1055.2,799.6 1052.6,801.1 1049.7,802.2 1047.2,803.9 1044.6,805.6 1041.5,806.1 1038.5,806.7 1035.9,808.4 1033.0,809.4 1030.1,810.3 1027.1,810.9 1024.3,812.0 1021.3,812.6 1018.4,813.5 1015.7,815.0 1012.7,815.7 1011.0,819.3 1010.8,823.3 1013.3,825.2 1016.6,825.3 1018.8,827.9 1021.4,829.4 1024.3,830.6 1027.5,830.9 1030.0,832.9 1031.1,836.1 1033.0,838.8 1035.6,841.1 1037.2,844.0 1037.3,847.7 1039.6,850.2 1041.5,852.7 1044.2,854.6 1046.5,856.8 1048.6,859.1 1050.6,861.6 1052.0,864.6 1054.7,866.4 1057.1,868.5 1058.8,871.3"/><polyline points="955.1,846.4 958.2,847.1 961.2,846.9 964.3,845.8 967.4,847.1 970.5,846.6 973.5,846.9 976.6,846.7 979.7,847.1 982.7,846.9 985.8,846.4 986.7,849.5 989.2,851.9 989.8,855.2 991.6,857.9 995.1,858.3 998.5,859.1 1002.0,858.9 1005.4,860.1 1008.9,859.8 1010.1,856.8 1010.8,853.5 1011.9,850.4 1012.9,847.3 1014.6,844.4 1017.7,845.1 1021.0,845.1 1024.0,846.5 1027.2,846.7 1030.2,848.0 1033.4,848.7 1036.5,849.5 1039.6,850.2"/><polyline points="937.4,796.5 939.5,799.2 943.0,800.2 944.6,803.5 947.6,805.2 950.0,807.5 952.4,809.8 955.1,811.8 955.3,815.4 956.9,818.7 957.6,822.1 957.4,825.8 959.0,829.1 962.3,830.4 964.7,832.9 962.6,835.5 960.7,838.2 959.6,841.5 956.9,843.6 955.1,846.4"/><polyline points="929.2,803.7 926.1,803.5 923.0,803.3 920.0,804.5 916.8,803.5 913.8,804.5 910.7,804.8 907.6,804.2 904.6,805.9 901.5,804.9 898.4,805.2 895.4,805.9 892.2,805.1 889.2,806.2 886.1,806.1 888.3,808.3 890.4,810.5 892.3,813.0 895.2,814.5 897.1,816.9 899.3,819.1 901.4,821.4 899.7,824.1 897.6,826.6 896.8,829.8 894.3,832.1 893.3,835.2 891.5,837.9 889.9,840.6 887.1,842.0 884.1,842.5 881.0,842.7 878.3,844.2 875.3,844.9 872.6,846.4 871.2,849.2 869.5,851.9 867.9,854.5 865.8,856.9 864.0,859.5 862.1,862.0 861.6,865.3 859.2,867.5 858.2,870.4 857.2,873.4 857.2,876.5 856.6,879.5"/><polyline points="955.1,846.4 952.7,849.0 949.5,850.5 947.0,852.8 943.6,854.0 943.2,857.3 941.0,860.0 940.6,863.3 939.5,866.4 938.4,869.5 937.2,872.5 936.8,875.8 936.0,879.0 933.1,879.8 930.2,880.7 927.2,881.5 924.4,882.6 921.5,883.4 918.7,884.7 916.2,887.5 912.8,889.3 910.1,892.0 907.2,894.3 907.0,897.6 908.5,900.8 908.6,904.2 909.1,907.4 908.1,910.8 908.1,914.2 909.1,917.4 912.8,919.6 916.8,921.2 913.5,920.9 910.3,919.5 907.0,919.1 903.6,918.9 900.2,918.9 896.9,918.3 893.7,917.4 894.8,920.2 895.9,923.0 896.7,926.0 897.3,929.0 897.8,932.0 900.2,934.4 900.3,937.6 901.4,940.4 901.8,943.6 901.3,946.6 899.7,949.5 899.7,952.6 899.5,955.7 896.6,957.0 894.6,959.6 892.6,962.2 889.7,963.6 887.0,965.2 884.2,966.7 882.2,969.2 880.4,972.3 880.3,975.9 879.5,979.3 878.4,982.6"/><polyline points="867.6,980.4 871.3,980.4 874.7,982.1 878.4,982.6 880.9,980.6 883.7,978.9 886.3,977.1 889.1,975.5 892.5,975.0 894.8,972.6 898.3,972.3 900.4,969.4 903.8,969.0 906.0,966.3 909.1,965.3 912.2,964.1 915.5,965.1 918.7,963.9 921.9,964.5 925.0,963.2 928.3,963.4 929.2,960.4 931.9,958.6 933.4,956.0 935.2,953.5 936.7,950.9 937.9,948.1 941.4,945.5 945.5,944.2 948.1,946.3 950.7,948.3 953.6,949.9 955.8,952.5 959.0,953.8 961.5,952.0 964.9,951.8 967.4,950.0 969.6,947.5 972.3,946.2 975.6,945.8 978.2,944.2"/><polyline points="856.6,879.5 853.0,881.2 850.1,883.9 851.5,886.9 851.7,890.1 851.5,893.4 853.1,896.3 852.5,899.7 853.8,902.7 854.4,905.8 854.5,908.9 853.2,911.7 852.1,914.6 851.6,917.6 850.5,920.4 850.1,923.4 853.1,925.1 855.0,928.2 858.1,929.8 860.4,932.3 863.2,934.3 860.8,936.3 858.9,938.8 856.8,941.0 854.1,942.7 851.7,944.7 849.7,947.1 847.8,949.6 845.7,951.9 848.0,954.3 850.3,956.6 851.0,960.2 853.4,962.5 855.2,965.2 857.9,967.3 859.5,970.2 860.9,973.2 863.1,975.6 865.5,977.9 867.6,980.4 865.6,982.8 863.2,984.8 866.0,986.9 868.3,989.7 871.6,991.2 874.2,993.5 871.1,994.3 868.1,995.5 864.9,996.1 862.0,997.4 859.3,999.4 856.4,1000.9 853.3,1001.6 850.1,1002.3 851.7,1005.2 852.8,1008.2 854.4,1011.1 851.4,1010.1 848.4,1009.5 845.1,1010.6 842.2,1008.7 839.1,1008.9 836.1,1009.8 833.3,1011.1 830.8,1012.9 828.3,1014.8 825.1,1015.2 822.4,1016.7 819.8,1018.2 817.2,1019.9 814.5,1021.6 813.0,1024.5 811.1,1027.0 808.3,1028.6 806.2,1030.8 803.0,1031.4 800.4,1033.5 797.0,1033.7 793.9,1034.5 791.3,1036.7 788.1,1037.2 785.0,1038.2 782.1,1039.6 778.6,1039.7 775.1,1040.1 771.5,1040.0 768.0,1039.1 764.5,1039.6"/><polyline points="663.0,861.2 666.5,861.0 669.9,859.7 673.3,859.1 675.3,861.5 675.5,864.8 677.4,867.3 680.3,869.1 683.8,869.6 686.6,871.6 689.4,873.5 692.5,874.8 695.9,875.6 699.2,875.9 702.6,876.1 705.9,876.5 709.3,876.0 712.6,876.3 716.0,876.5 719.2,877.7 722.6,877.6 724.2,880.2 725.3,883.1 726.8,885.8 729.1,883.6 731.6,881.7 733.6,879.2 735.9,877.0 739.4,876.2 741.2,873.5 744.1,872.3 747.0,870.8 750.3,870.6 753.4,869.9 756.1,867.8 759.3,867.5 762.3,866.3 764.0,869.5 765.2,872.9 766.7,876.2 769.7,874.7 772.8,874.1 776.3,875.2 779.3,874.3 782.3,873.0 785.5,872.5 788.6,871.8 791.6,871.0 794.8,871.6 797.8,870.7 801.0,871.3 804.0,870.6 807.1,870.4 810.2,870.3 813.1,868.7 816.1,868.0 819.3,868.5 822.5,868.6 825.6,869.3 828.7,869.7 831.8,870.3 834.7,871.9 837.6,873.1 840.9,873.0 843.8,874.6 846.9,875.2 850.1,875.1 853.8,876.7 856.6,879.5"/><polyline points="671.2,828.3 672.1,832.4 673.3,836.5 670.9,839.2 668.6,842.1 665.0,843.6 663.0,846.8 663.4,850.4 662.9,854.0 662.7,857.6 663.0,861.2 659.8,862.2 657.4,864.3 654.8,866.3 658.2,867.8 661.4,869.5 665.0,870.7 668.0,872.9 664.7,874.1 661.9,875.9 659.8,879.0 657.2,881.1 654.2,882.7 651.3,884.4 648.3,886.1 649.3,889.2 650.9,891.9 652.7,894.6 654.8,897.0 651.5,899.2 647.3,899.5 643.9,901.4 641.8,903.8 640.2,906.5 637.9,908.8 637.5,912.4 635.1,914.6 631.3,914.5 627.9,912.7 624.1,912.4"/><polyline points="845.7,951.9 842.2,950.4 838.4,950.1 834.7,949.7 833.9,946.2 834.0,942.6 833.8,939.1 832.2,935.7 832.5,932.1 829.0,932.4 825.5,932.5 822.0,932.8 818.5,932.1 815.0,932.1 811.9,931.7 809.0,930.6 806.0,929.8 803.4,927.9 800.1,928.1 797.5,925.9 794.3,925.9 791.3,925.2 788.6,923.4 787.1,926.9 787.6,930.8 786.4,934.3 782.8,935.3 779.6,937.0 776.3,938.6 773.3,940.9 773.9,944.2 773.4,947.5 774.0,950.8 773.3,954.1 770.9,956.3 769.3,959.0 767.8,961.8 766.3,964.6 764.5,967.2 765.1,970.5 764.5,973.8 765.4,977.1 765.4,980.4 766.5,983.6 766.6,986.9 767.2,990.1 766.7,993.5 764.7,996.1 763.3,999.0 762.3,1002.1 760.1,1004.5 759.8,1007.7 761.1,1010.7 761.2,1013.9 762.0,1017.0 762.1,1020.1 761.4,1023.3 762.3,1026.4 763.1,1029.7 764.0,1032.9 764.0,1036.3 764.5,1039.6"/><polyline points="764.5,967.2 761.1,966.4 757.9,965.0 755.2,966.7 754.0,969.9 750.7,971.0 749.7,974.3 746.4,975.5 744.5,977.9 742.9,980.7 740.4,982.6 738.4,985.0 736.3,987.2 734.2,989.5 731.6,991.3 728.7,992.4 725.3,992.1 722.3,992.9 719.3,993.9 716.7,996.1 713.6,996.6 710.3,996.4 707.5,997.9 708.3,1002.3 707.5,1006.7 704.1,1007.0 701.0,1008.5 697.4,1008.1 694.5,1010.5 690.9,1009.8 687.7,1011.1 684.9,1013.2 682.2,1015.3 679.4,1017.4 675.7,1017.9 673.1,1020.2 670.2,1022.1 671.2,1025.1 671.2,1028.2 670.8,1031.4 672.5,1034.3 672.4,1037.4 670.1,1039.5 668.5,1042.3 666.2,1044.4 663.6,1046.2 659.9,1045.7 656.3,1045.8 652.6,1046.2"/><polyline points="663.6,1046.2 665.8,1048.4 667.1,1051.9 668.0,1055.5 668.0,1059.3 667.6,1062.8 665.6,1065.8 664.7,1069.2 663.6,1072.5"/><polyline points="764.5,1039.6 761.2,1040.0 757.9,1040.1 754.6,1039.4 751.3,1039.6 750.7,1042.6 750.2,1045.6 750.4,1048.6 750.8,1051.7 750.8,1054.7 749.3,1057.6 749.6,1060.7 749.2,1063.7 745.8,1064.4 742.6,1065.9 743.8,1069.1 742.8,1072.6 744.0,1075.8 743.5,1079.2 743.8,1082.5 744.8,1085.7 745.7,1088.8 747.4,1091.6 746.7,1095.1 748.4,1097.9 749.2,1101.0 752.3,1102.3 755.7,1101.9 759.0,1102.5 762.0,1104.3 765.3,1104.4 768.5,1103.2 771.7,1101.9 775.1,1101.2 778.5,1100.6 781.7,1099.5 784.3,1101.6 785.4,1104.7 787.4,1107.2 789.2,1109.9 791.7,1112.0 792.7,1115.2 794.9,1117.6 794.9,1122.5"/><polyline points="794.9,1117.6 796.0,1121.2 798.2,1124.2 801.7,1123.7 804.7,1121.7 808.2,1121.3 811.3,1119.6 814.8,1119.1 817.9,1117.6 820.7,1115.9 824.2,1116.4 827.3,1115.6 830.1,1113.8 833.2,1112.9 836.3,1112.0 839.3,1111.0 843.0,1111.1 846.7,1111.0"/><polyline points="794.9,1122.5 794.0,1126.2 790.8,1128.7 790.4,1132.6 788.3,1135.7 784.7,1134.5 781.4,1133.0 778.4,1130.7 775.3,1132.2 771.7,1132.4 768.6,1134.0 768.1,1137.6 766.8,1140.9 764.5,1143.8 763.6,1147.2 766.5,1149.3 768.6,1152.1 766.0,1154.5 762.5,1155.2 759.5,1156.9 756.5,1158.7 753.3,1160.0 750.5,1162.0 747.6,1164.7 743.9,1166.1 740.7,1164.8 737.4,1164.5 733.8,1165.0 730.7,1163.6"/><polyline points="686.3,1132.4 689.2,1133.8 691.2,1136.2 693.7,1138.2 696.4,1139.8 699.1,1141.4 701.1,1143.9 704.0,1146.5 707.0,1148.9 709.3,1152.1 711.9,1153.7 714.3,1155.5 717.6,1155.9 719.9,1158.0 722.5,1159.7 725.6,1160.2 727.7,1162.7 730.7,1163.6 727.7,1165.5 725.8,1168.6 728.7,1170.6 731.4,1172.9 734.0,1175.2 735.1,1178.2 737.3,1180.7 739.1,1183.3 739.9,1186.5 741.8,1189.1 743.9,1191.6 744.2,1195.4 744.4,1199.3 743.9,1203.1 747.8,1203.9 751.6,1205.2 755.4,1206.4 754.5,1209.7 754.9,1213.0 754.7,1216.2 754.8,1219.5 754.8,1222.8 755.4,1226.1 758.7,1229.4 758.7,1232.9 757.0,1236.0 755.4,1239.1 754.7,1242.4 755.1,1246.0 753.8,1249.2 753.6,1252.5 752.9,1255.7 753.0,1259.1 752.4,1262.3 752.1,1265.6"/><polyline points="1074.7,706.5 1078.3,705.1 1082.2,705.0 1086.0,704.5 1089.0,704.9 1092.1,704.4 1095.1,705.1 1097.9,706.9 1101.0,706.5"/><polyline points="1128.6,719.9 1128.6,724.0 1129.5,727.9 1127.0,730.7 1125.9,734.2"/><polyline points="1195.7,713.2 1199.0,713.3 1202.3,713.4 1205.6,713.3 1208.9,713.2 1212.2,711.4 1215.5,712.1 1218.6,712.1 1221.6,711.2 1224.7,711.8 1227.8,710.8 1230.9,711.1 1234.0,711.5 1237.0,710.8 1240.0,709.9 1243.1,710.2 1246.2,709.9 1248.3,707.3 1251.2,705.3 1252.5,702.0 1254.7,699.5 1257.3,697.3 1259.3,694.6 1262.3,693.3 1265.6,693.5 1268.9,693.5 1271.9,692.1 1274.9,691.0 1278.1,690.8 1281.3,690.2 1284.5,689.5 1287.5,688.1 1290.6,687.3 1293.8,686.6 1297.0,686.2 1300.3,685.6 1303.4,684.7 1306.5,683.9 1309.8,683.6 1309.4,686.8 1307.5,689.4 1306.5,692.4 1307.0,695.5 1308.5,698.3 1309.8,701.2 1307.0,702.4 1304.2,703.7 1301.8,705.8 1298.7,706.3 1296.1,708.1 1293.3,709.3 1290.5,710.6 1287.9,712.1 1288.0,716.5 1287.9,720.9"/><polyline points="1129.9,745.0 1132.1,745.0 1135.2,744.8 1138.2,744.9 1141.2,745.0 1144.3,745.7 1147.3,745.6 1150.3,746.2 1153.4,745.3 1156.4,746.1 1159.4,747.2 1162.5,746.2 1165.5,747.0 1168.6,747.0 1171.6,747.2 1174.6,745.7 1178.1,745.8 1180.9,743.6 1184.3,743.3 1187.0,741.1 1190.1,739.9 1193.5,739.5 1196.7,740.7 1200.1,740.6 1200.2,745.0 1200.1,749.4 1202.9,751.0 1204.6,753.7 1206.8,755.9 1208.6,758.5 1211.6,759.9 1213.3,762.6"/><polyline points="1213.3,762.6 1215.3,765.2 1215.7,768.6 1217.6,771.3 1220.1,773.6 1221.3,776.5 1222.9,779.4 1224.2,782.3 1223.5,785.3 1223.2,788.4 1222.3,791.5 1221.9,794.5 1222.1,797.7 1225.7,797.7 1229.4,798.1 1233.0,797.7"/><polyline points="1233.0,762.6 1233.4,758.2 1233.0,753.8 1236.3,752.4 1239.1,750.2 1242.5,749.0 1245.5,747.1 1248.4,745.0 1250.6,742.5 1250.9,739.0 1253.7,736.9 1253.8,733.3 1256.6,731.2 1257.9,728.2 1259.3,725.3 1262.5,724.8 1265.8,725.1 1268.9,724.0 1272.0,723.2 1275.3,723.4 1278.5,723.0 1281.6,722.1 1284.7,721.2 1287.9,720.9"/><polyline points="1224.2,782.3 1225.4,779.5 1226.6,776.6 1228.3,774.0 1228.9,770.9 1230.3,768.1 1231.8,765.5 1233.0,762.6 1235.5,760.7 1238.1,758.8 1241.2,757.7 1243.9,756.1 1246.2,753.8 1249.2,753.8 1252.2,753.7 1255.2,753.2 1258.2,753.4 1261.3,753.2 1264.3,753.9 1267.3,753.9 1270.3,753.8"/><polyline points="1197.9,786.7 1200.7,789.6 1202.3,793.3 1201.5,796.6 1202.6,799.9 1201.7,803.1 1201.7,806.4 1201.5,809.7 1202.3,813.0"/></g><polygon fill="#232323" stroke="#232323" stroke-width="1" points="1078.0,842.0 1080.7,842.3 1082.2,844.4 1084.0,846.0 1086.5,844.7 1084.2,841.1 1085.4,839.2 1088.0,838.0 1090.1,837.6 1092.0,836.7 1094.0,836.0 1094.3,838.7 1096.2,839.8 1098.4,840.6 1100.0,842.0 1098.9,844.7 1101.4,846.0 1102.2,848.0 1103.0,850.0 1103.1,852.3 1104.9,853.8 1105.8,855.8 1106.0,858.0 1105.9,860.0 1107.1,861.9 1105.0,864.2 1107.0,866.0 1106.0,868.2 1106.2,870.7 1106.0,873.0 1104.2,874.8 1102.1,874.0 1100.0,874.1 1098.0,874.0 1096.0,873.5 1094.0,873.2 1092.2,871.7 1090.0,873.0 1087.7,871.5 1086.0,873.7 1084.0,874.0 1081.9,873.6 1080.2,872.2 1078.0,872.0 1078.8,869.1 1075.4,868.3 1075.0,866.0 1076.1,864.1 1078.1,862.6 1076.8,859.4 1079.0,858.0 1077.3,856.3 1078.7,853.1 1076.0,852.0 1077.7,850.3 1076.8,848.0 1075.7,845.7 1079.1,844.3"/><polygon fill="#232323" stroke="#232323" stroke-width="1" points="488.0,803.0 490.2,803.1 492.4,802.9 494.0,801.0 493.2,804.2 496.0,806.0 495.3,808.7 497.8,810.4 499.6,812.3 499.0,815.0 500.2,817.2 499.6,819.7 500.0,822.0 498.0,822.0 496.0,822.0 493.7,820.6 492.5,818.7 492.8,815.7 491.6,813.8 490.0,812.0 488.9,809.9 490.9,807.1 489.0,805.1"/><ellipse cx="830.0" cy="1158.0" rx="3.5" ry="4.5" fill="#232323" stroke="#232323" stroke-width="1.2"/><ellipse cx="832.0" cy="1187.0" rx="1.8" ry="1.6" fill="#ffa01a" stroke="#232323" stroke-width="1.2"/><ellipse cx="817.0" cy="1176.0" rx="0.6" ry="0.6" fill="#232323" stroke="#232323" stroke-width="1.2"/><ellipse cx="1096.0" cy="734.0" rx="3.0" ry="2.2" fill="#232323" stroke="#232323" stroke-width="1.2"/><ellipse cx="1121.0" cy="744.0" rx="1.0" ry="1.0" fill="#232323" stroke="#232323" stroke-width="1.2"/><ellipse cx="1088.5" cy="726.0" rx="1.5" ry="1.0" fill="#ffffff" stroke="#232323" stroke-width="1.2"/><ellipse cx="1222.6" cy="1152.0" rx="3.5" ry="5.0" fill="#232323" stroke="#232323" stroke-width="1.2"/><ellipse cx="1199.6" cy="1169.0" rx="2.5" ry="2.0" fill="#232323" stroke="#232323" stroke-width="1.2"/><ellipse cx="1211.0" cy="1130.0" rx="3.0" ry="5.0" fill="#232323" stroke="#232323" stroke-width="1.2"/><ellipse cx="1218.0" cy="1142.0" rx="2.5" ry="4.0" fill="#232323" stroke="#232323" stroke-width="1.2"/><ellipse cx="1207.0" cy="1194.0" rx="3.5" ry="6.0" fill="#ffa01a" stroke="#232323" stroke-width="1.2"/><ellipse cx="1259.6" cy="1112.2" rx="1.2" ry="1.2" fill="#232323" stroke="#232323" stroke-width="1.2"/><ellipse cx="1247.3" cy="1146.7" rx="1.2" ry="1.2" fill="#232323" stroke="#232323" stroke-width="1.2"/><ellipse cx="1215.2" cy="1239.0" rx="2.0" ry="2.0" fill="#ffa01a" stroke="#232323" stroke-width="1.2"/><ellipse cx="1226.0" cy="1264.3" rx="1.5" ry="1.5" fill="#232323" stroke="#232323" stroke-width="1.2"/><ellipse cx="1237.4" cy="1270.9" rx="2.0" ry="3.0" fill="#232323" stroke="#232323" stroke-width="1.2"/><ellipse cx="1233.3" cy="1274.2" rx="2.0" ry="1.5" fill="#ffa01a" stroke="#232323" stroke-width="1.2"/><ellipse cx="1245.7" cy="1302.0" rx="4.0" ry="7.0" fill="#ffa01a" stroke="#232323" stroke-width="1.2"/><ellipse cx="1240.7" cy="1259.4" rx="1.0" ry="2.0" fill="#232323" stroke="#232323" stroke-width="1.2"/><ellipse cx="1242.4" cy="1292.3" rx="2.0" ry="2.0" fill="#ffa01a" stroke="#232323" stroke-width="1.2"/><ellipse cx="1213.0" cy="1180.0" rx="1.0" ry="1.5" fill="#232323" stroke="#232323" stroke-width="1.2"/><ellipse cx="1210.0" cy="1186.0" rx="1.0" ry="1.0" fill="#232323" stroke="#232323" stroke-width="1.2"/><ellipse cx="597.4" cy="1145.2" rx="1.5" ry="2.0" fill="#232323" stroke="#232323" stroke-width="1.2"/><ellipse cx="594.7" cy="1158.4" rx="2.0" ry="2.0" fill="#232323" stroke="#232323" stroke-width="1.2"/><ellipse cx="605.1" cy="1168.8" rx="1.5" ry="2.0" fill="#232323" stroke="#232323" stroke-width="1.2"/><ellipse cx="621.5" cy="1164.4" rx="1.0" ry="1.0" fill="#232323" stroke="#232323" stroke-width="1.2"/><ellipse cx="630.3" cy="1170.4" rx="1.0" ry="1.0" fill="#232323" stroke="#232323" stroke-width="1.2"/><ellipse cx="601.8" cy="1179.8" rx="1.5" ry="1.5" fill="#232323" stroke="#232323" stroke-width="1.2"/><ellipse cx="622.6" cy="1179.2" rx="1.3" ry="2.0" fill="#232323" stroke="#232323" stroke-width="1.2"/><ellipse cx="661.0" cy="1177.0" rx="2.5" ry="2.0" fill="#ffa01a" stroke="#232323" stroke-width="1.2"/><ellipse cx="606.2" cy="1189.1" rx="1.3" ry="2.0" fill="#232323" stroke="#232323" stroke-width="1.2"/><ellipse cx="609.5" cy="1186.3" rx="1.5" ry="1.0" fill="#232323" stroke="#232323" stroke-width="1.2"/><ellipse cx="616.6" cy="1191.3" rx="0.8" ry="0.8" fill="#232323" stroke="#232323" stroke-width="1.2"/><ellipse cx="619.3" cy="1197.9" rx="1.5" ry="1.2" fill="#232323" stroke="#232323" stroke-width="1.2"/><ellipse cx="650.0" cy="1190.7" rx="1.5" ry="1.0" fill="#232323" stroke="#232323" stroke-width="1.2"/><ellipse cx="609.5" cy="1212.7" rx="1.3" ry="2.0" fill="#232323" stroke="#232323" stroke-width="1.2"/><ellipse cx="649.5" cy="1211.6" rx="1.3" ry="2.0" fill="#232323" stroke="#232323" stroke-width="1.2"/><ellipse cx="631.4" cy="1264.7" rx="2.0" ry="2.0" fill="#232323" stroke="#232323" stroke-width="1.2"/></svg><div class="t22" style="left:8px;top:295px;font-size:23px;letter-spacing:0.3px">Browser</div><svg class="a" style="left:393px;top:299px" width="52" height="22" viewBox="0 0 52 22"><rect x="1" y="1" width="20" height="20" rx="2.5" fill="none" stroke="#6e6e6e" stroke-width="1.6"/><rect x="5" y="9" width="8" height="8" fill="none" stroke="#6e6e6e" stroke-width="1.6"/><path d="M9 9 L9 5 L17 5 L17 13 L13 13" fill="none" stroke="#6e6e6e" stroke-width="1.6"/><rect x="30" y="1" width="20" height="20" rx="2.5" fill="none" stroke="#6e6e6e" stroke-width="1.6"/><path d="M35 6 L45 16 M45 6 L35 16" stroke="#6e6e6e" stroke-width="3.2"/></svg><svg class="a" style="left:17px;top:344px" width="32" height="32" viewBox="0 0 32 32"><rect x="2" y="2" width="22" height="22" fill="#f2f2f2" stroke="#7d7d7d" stroke-width="2"/><rect x="17" y="17" width="13" height="13" rx="2" fill="#4f9a4f"/><path d="M23.5 19.5 V27.5 M19.5 23.5 H27.5" stroke="#fff" stroke-width="2.4"/></svg><svg class="a" style="left:67px;top:343px" width="30" height="32" viewBox="0 0 30 32"><path d="M3 16 A12 11 0 0 1 24 8 L27 4 L28 15 L17 14 L21 10 A8 7 0 0 0 8 16 Z" fill="#4c86c8"/><path d="M27 16 A12 11 0 0 1 6 24 L3 28 L2 17 L13 18 L9 22 A8 7 0 0 0 22 16 Z" fill="#3d78bf"/></svg><svg class="a" style="left:118px;top:343px" width="28" height="32" viewBox="0 0 28 32"><path d="M1 1 H27 V7 L17 19 V31 L11 25 V19 L1 7 Z" fill="#6e9bd0" stroke="#33507a" stroke-width="1.4"/><rect x="2.5" y="2.5" width="23" height="4" fill="#ffe74a"/></svg><svg class="a" style="left:167px;top:343px" width="32" height="30" viewBox="0 0 32 30"><path d="M1 4 H28" stroke="#999" stroke-width="2"/><path d="M3 4 V27 M3 12 H9 M3 25 H9" stroke="#aaa" stroke-width="2"/><rect x="8" y="9" width="6" height="6" fill="#fbb33a"/><rect x="8" y="21" width="6" height="6" fill="#fbb33a"/><path d="M20 27 V13 H14 L23 1 L31 13 H25 V27 Z" fill="#6e9bd0" stroke="#33507a" stroke-width="1.4"/></svg><svg class="a" style="left:218px;top:345px" width="28" height="28" viewBox="0 0 28 28"><circle cx="14" cy="14" r="12.8" fill="#6e9bd0" stroke="#3a5f8e" stroke-width="1.4"/><path d="M12 12 H16 L13.5 22 H10 Z" fill="#fff"/><circle cx="15.5" cy="7.5" r="2" fill="#fff"/></svg><div class="box" style="left:0;top:391px;width:448px;height:342px"></div><div class="a" style="left:2px;top:501px;width:417px;height:36px;background:#dcdcdc"></div><div class="a" style="left:2px;top:393px;width:416px;height:310px;overflow:hidden"><svg class="a" style="left:106px;top:10px" width="10" height="16" viewBox="0 0 10 16"><path d="M1 0 L9 8 L1 16 Z" fill="#5b5b5b"/></svg><svg class="a" style="left:135px;top:4px" width="31" height="29" viewBox="0 0 31 29"><path d="M2.5 2.5 Q2.5 1.5 3.5 1.5 L12 1.5 L15.5 5.5 L28 5.5 Q29 5.5 29 6.5 L29 26 Q29 27 28 27 L3.5 27 Q2.5 27 2.5 26 Z" fill="#efefef" stroke="#7e817c" stroke-width="1.7" stroke-linejoin="round"/></svg><div class="t26" style="left:178px;top:0px;letter-spacing:0.75px">eci</div><svg class="a" style="left:106px;top:46px" width="10" height="16" viewBox="0 0 10 16"><path d="M1 0 L9 8 L1 16 Z" fill="#5b5b5b"/></svg><svg class="a" style="left:135px;top:40px" width="31" height="29" viewBox="0 0 31 29"><path d="M2.5 2.5 Q2.5 1.5 3.5 1.5 L12 1.5 L15.5 5.5 L28 5.5 Q29 5.5 29 6.5 L29 26 Q29 27 28 27 L3.5 27 Q2.5 27 2.5 26 Z" fill="#efefef" stroke="#7e817c" stroke-width="1.7" stroke-linejoin="round"/></svg><div class="t26" style="left:178px;top:36px;letter-spacing:0.75px">parliamentary-cons</div><svg class="a" style="left:103px;top:85px" width="16" height="10" viewBox="0 0 16 10"><path d="M0 1 L16 1 L8 9 Z" fill="#5b5b5b"/></svg><svg class="a" style="left:135px;top:76px" width="31" height="29" viewBox="0 0 31 29"><path d="M2 0.5 L12 0.5 L15 4 L29 4 L29 9.5 L2 9.5 Z" fill="#868985"/><path d="M2.5 10 L12 10 L15.5 13.5 L28 13.5 Q29 13.5 29 14.5 L29 26 Q29 27 28 27 L3.5 27 Q2.5 27 2.5 26 Z" fill="#efefef" stroke="#7e817c" stroke-width="1.7" stroke-linejoin="round"/></svg><div class="t26" style="left:178px;top:72px;letter-spacing:0.75px">States</div><svg class="a" style="left:138px;top:118px" width="10" height="16" viewBox="0 0 10 16"><path d="M1 0 L9 8 L1 16 Z" fill="#5b5b5b"/></svg><svg class="a" style="left:169px;top:110px" width="32" height="32" viewBox="0 0 32 32"><defs><linearGradient id="lf" x1="0" y1="0" x2="1" y2="1"><stop offset="0" stop-color="#e6e6e6"/><stop offset="1" stop-color="#b9b9b9"/></linearGradient></defs><path d="M14 4.6 H26.3 M14 4.6 L3.7 27" stroke="#8a8a8a" stroke-width="1.4" fill="none"/><path d="M12 24 Q13 17 22 14.5 Q28 14 28.5 20 Q28 27 19 28.5 Q12 29 12 24 Z" fill="url(#lf)" stroke="#8a8a8a" stroke-width="1.4"/><circle cx="3.7" cy="8.8" r="2.3" fill="#fff" stroke="#8a8a8a" stroke-width="1.3"/><circle cx="14" cy="4.6" r="2.3" fill="#fff" stroke="#8a8a8a" stroke-width="1.3"/><circle cx="26.3" cy="4.6" r="2.3" fill="#fff" stroke="#8a8a8a" stroke-width="1.3"/><circle cx="3.7" cy="27" r="2.3" fill="#fff" stroke="#8a8a8a" stroke-width="1.3"/></svg><div class="t26" style="left:210px;top:108px;letter-spacing:0.75px">Admin2.shp</div><svg class="a" style="left:106px;top:154px" width="10" height="16" viewBox="0 0 10 16"><path d="M1 0 L9 8 L1 16 Z" fill="#5b5b5b"/></svg><svg class="a" style="left:135px;top:148px" width="31" height="29" viewBox="0 0 31 29"><path d="M2.5 2.5 Q2.5 1.5 3.5 1.5 L12 1.5 L15.5 5.5 L28 5.5 Q29 5.5 29 6.5 L29 26 Q29 27 28 27 L3.5 27 Q2.5 27 2.5 26 Z" fill="#efefef" stroke="#7e817c" stroke-width="1.7" stroke-linejoin="round"/></svg><div class="t26" style="left:178px;top:144px;letter-spacing:0.75px">Survey-of-India-Ind</div><svg class="a" style="left:106px;top:190px" width="10" height="16" viewBox="0 0 10 16"><path d="M1 0 L9 8 L1 16 Z" fill="#5b5b5b"/></svg><svg class="a" style="left:135px;top:184px" width="31" height="29" viewBox="0 0 31 29"><path d="M2.5 2.5 Q2.5 1.5 3.5 1.5 L12 1.5 L15.5 5.5 L28 5.5 Q29 5.5 29 6.5 L29 26 Q29 27 28 27 L3.5 27 Q2.5 27 2.5 26 Z" fill="#efefef" stroke="#7e817c" stroke-width="1.7" stroke-linejoin="round"/></svg><div class="t26" style="left:178px;top:180px;letter-spacing:0.75px">website</div><svg class="a" style="left:74px;top:226px" width="10" height="16" viewBox="0 0 10 16"><path d="M1 0 L9 8 L1 16 Z" fill="#5b5b5b"/></svg><svg class="a" style="left:103px;top:220px" width="31" height="29" viewBox="0 0 31 29"><path d="M2.5 2.5 Q2.5 1.5 3.5 1.5 L12 1.5 L15.5 5.5 L28 5.5 Q29 5.5 29 6.5 L29 26 Q29 27 28 27 L3.5 27 Q2.5 27 2.5 26 Z" fill="#efefef" stroke="#7e817c" stroke-width="1.7" stroke-linejoin="round"/></svg><div class="t26" style="left:146px;top:216px;letter-spacing:0.75px">packages</div><svg class="a" style="left:74px;top:262px" width="10" height="16" viewBox="0 0 10 16"><path d="M1 0 L9 8 L1 16 Z" fill="#5b5b5b"/></svg><svg class="a" style="left:103px;top:256px" width="31" height="29" viewBox="0 0 31 29"><path d="M2.5 2.5 Q2.5 1.5 3.5 1.5 L12 1.5 L15.5 5.5 L28 5.5 Q29 5.5 29 6.5 L29 26 Q29 27 28 27 L3.5 27 Q2.5 27 2.5 26 Z" fill="#efefef" stroke="#7e817c" stroke-width="1.7" stroke-linejoin="round"/></svg><div class="t26" style="left:146px;top:252px;letter-spacing:0.75px">PROJECT</div><svg class="a" style="left:74px;top:298px" width="10" height="16" viewBox="0 0 10 16"><path d="M1 0 L9 8 L1 16 Z" fill="#5b5b5b"/></svg><svg class="a" style="left:103px;top:292px" width="31" height="29" viewBox="0 0 31 29"><path d="M2.5 2.5 Q2.5 1.5 3.5 1.5 L12 1.5 L15.5 5.5 L28 5.5 Q29 5.5 29 6.5 L29 26 Q29 27 28 27 L3.5 27 Q2.5 27 2.5 26 Z" fill="#efefef" stroke="#7e817c" stroke-width="1.7" stroke-linejoin="round"/></svg><div class="t26" style="left:146px;top:288px;letter-spacing:0.75px">pyqgis_masterclass</div></div><div class="a" style="left:418px;top:393px;width:28px;height:310px;background:#e1e1e1;border-left:1px solid #c9c9c9"></div><div class="sb" style="left:419px;top:393px;width:27px;height:26px;border-bottom:2px solid #c4c4c4"></div><svg class="a" style="left:424px;top:400px" width="16" height="10" viewBox="0 0 16 10"><path d="M0 9 L16 9 L8 1 Z" fill="#5b5b5b"/></svg><div class="sb" style="left:419px;top:459px;width:27px;height:54px;border-top:2px solid #bdbdbd;border-bottom:2px solid #bdbdbd"></div><div class="sb" style="left:419px;top:675px;width:27px;height:28px;border-top:2px solid #c4c4c4"></div><svg class="a" style="left:424px;top:683px" width="16" height="10" viewBox="0 0 16 10"><path d="M0 1 L16 1 L8 9 Z" fill="#5b5b5b"/></svg><div class="a" style="left:2px;top:703px;width:444px;height:28px;background:#e1e1e1;border-top:1px solid #c9c9c9"></div><div class="sb" style="left:2px;top:704px;width:26px;height:27px;border-right:2px solid #c4c4c4"></div><svg class="a" style="left:9px;top:709px" width="10" height="16" viewBox="0 0 10 16"><path d="M9 0 L1 8 L9 16 Z" fill="#5b5b5b"/></svg><div class="sb" style="left:28px;top:704px;width:84px;height:27px;border-right:2px solid #bdbdbd"></div><div class="sb" style="left:389px;top:704px;width:29px;height:27px;border-left:2px solid #c4c4c4"></div><svg class="a" style="left:399px;top:709px" width="10" height="16" viewBox="0 0 10 16"><path d="M1 0 L9 8 L1 16 Z" fill="#5b5b5b"/></svg><div class="a" style="left:418px;top:703px;width:28px;height:28px;background:#ececec;border-left:1px solid #c4c4c4;border-top:1px solid #c4c4c4"></div><div class="a" style="left:208px;top:736px;width:36px;height:4px;background-image:radial-gradient(circle,#aaa 1px,transparent 1.4px);background-size:6px 4px"></div><div class="t22" style="left:8px;top:749px;font-size:23px;letter-spacing:0.3px">Layers</div><svg class="a" style="left:393px;top:753px" width="52" height="22" viewBox="0 0 52 22"><rect x="1" y="1" width="20" height="20" rx="2.5" fill="none" stroke="#6e6e6e" stroke-width="1.6"/><rect x="5" y="9" width="8" height="8" fill="none" stroke="#6e6e6e" stroke-width="1.6"/><path d="M9 9 L9 5 L17 5 L17 13 L13 13" fill="none" stroke="#6e6e6e" stroke-width="1.6"/><rect x="30" y="1" width="20" height="20" rx="2.5" fill="none" stroke="#6e6e6e" stroke-width="1.6"/><path d="M35 6 L45 16 M45 6 L35 16" stroke="#6e6e6e" stroke-width="3.2"/></svg><svg class="a" style="left:16px;top:797px" width="32" height="32" viewBox="0 0 32 32"><path d="M2 18 L14 10 L24 22 L10 28 Z" fill="#e8323c"/><path d="M4 14 L14 8 L20 14 L8 22 Z" fill="#f3d130"/><path d="M3 17 L12 11 L17 17 L7 23 Z" fill="#3b7fd0" opacity="0.7"/><path d="M10 14 L18 10 L24 18 L16 24 Z" fill="#d8a45a" stroke="#9a6b2a" stroke-width="1"/><path d="M20 13 L30 3" stroke="#c88d2e" stroke-width="3.5" stroke-linecap="round"/></svg><svg class="a" style="left:66px;top:797px" width="32" height="32" viewBox="0 0 32 32"><path d="M3 10 V26 H17" fill="none" stroke="#888" stroke-width="1.6"/><rect x="7" y="6" width="15" height="18" fill="#ececec" stroke="#777" stroke-width="1.6"/><path d="M12 12 V2 Q15 -1 17 2 V16" fill="none" stroke="#3a6db5" stroke-width="1.8"/><rect x="16" y="18" width="13" height="13" rx="2" fill="#4f9a4f"/><path d="M22.5 20.5 V28.5 M18.5 24.5 H26.5" stroke="#fff" stroke-width="2.4"/></svg><svg class="a" style="left:116px;top:803px" width="38" height="28" viewBox="0 0 38 28"><path d="M1 11 Q14 0 28 8 Q31 14 27 20" fill="none" stroke="#888" stroke-width="1.5"/><path d="M2 12 Q14 22 26 14" fill="none" stroke="#999" stroke-width="1.4"/><circle cx="14" cy="11" r="6" fill="#3f78c7"/><circle cx="15" cy="10" r="2.4" fill="#111"/><path d="M24 19 H36 L30 25 Z" fill="#555"/></svg><svg class="a" style="left:168px;top:797px" width="36" height="34" viewBox="0 0 36 34"><path d="M1 1 H27 V7 L17 19 V31 L11 25 V19 L1 7 Z" fill="#6e9bd0" stroke="#33507a" stroke-width="1.4"/><rect x="2.5" y="2.5" width="23" height="4" fill="#ffe74a"/><path d="M21 25 H34 L27.5 31 Z" fill="#555"/></svg><svg class="a" style="left:216px;top:793px" width="36" height="40" viewBox="0 0 36 40"><text x="2" y="25" font-family="Liberation Serif" font-size="38" fill="#5f2f86">ε</text><path d="M18.5 36 V25 Q18.5 21.5 22 21.5 H28 Q31.5 21.5 31.5 25 V36 H27 V27 H23 V36 Z" fill="#a0a0a0" stroke="#8c8c8c" stroke-width="1"/></svg><svg class="a" style="left:259px;top:810px" width="16" height="8" viewBox="0 0 16 8"><path d="M1 1 L15 1 L8 7.5 Z" fill="#555"/></svg><svg class="a" style="left:290px;top:797px" width="34" height="32" viewBox="0 0 34 32"><path d="M1 5 H28" stroke="#999" stroke-width="2"/><path d="M3 5 V27 M3 13 H9 M3 26 H9" stroke="#aaa" stroke-width="2"/><rect x="8" y="10" width="6" height="6" fill="#fbb33a"/><rect x="8" y="22" width="6" height="6" fill="#fbb33a"/><path d="M20 3 V17 H14 L23 28 L32 17 H26 V3 Z" fill="#6e9bd0" stroke="#33507a" stroke-width="1.4"/></svg><svg class="a" style="left:341px;top:797px" width="34" height="32" viewBox="0 0 34 32"><path d="M1 5 H28" stroke="#999" stroke-width="2"/><path d="M3 5 V27 M3 13 H9 M3 26 H9" stroke="#aaa" stroke-width="2"/><rect x="8" y="10" width="6" height="6" fill="#fbb33a"/><rect x="8" y="22" width="6" height="6" fill="#fbb33a"/><path d="M20 27 V13 H14 L23 1 L32 13 H26 V27 Z" fill="#6e9bd0" stroke="#33507a" stroke-width="1.4"/></svg><svg class="a" style="left:390px;top:797px" width="32" height="32" viewBox="0 0 32 32"><rect x="2" y="2" width="22" height="22" fill="#f2f2f2" stroke="#7d7d7d" stroke-width="2"/><rect x="16" y="19" width="14" height="11" rx="2.5" fill="#e6404a"/><path d="M19 24.5 H27" stroke="#fff" stroke-width="2.4"/></svg><div class="box" style="left:0;top:845px;width:448px;height:556px"></div><div class="a" style="left:2px;top:847px;width:444px;height:36px;background:#dcdcdc"></div><div class="a" style="left:48px;top:851px;width:28px;height:28px;background:#fff;border:1.5px solid #b9b9b9"></div><svg class="a" style="left:52px;top:853px" width="20" height="24" viewBox="0 0 20 24"><path d="M3 12 L8 20 L17 3" fill="none" stroke="#222" stroke-width="3"/></svg><div class="a" style="left:88px;top:849px;width:32px;height:32px;background:#ff9e1a;border:1px solid #bd7a1a"></div><div class="a" style="left:132px;top:846px;font-size:26px;font-weight:bold;line-height:36px;text-decoration:underline;text-decoration-thickness:3px;text-underline-offset:3px;color:#111;white-space:nowrap">Admin2</div><div class="a" style="left:452px;top:833px;width:4px;height:34px;background-image:radial-gradient(circle,#aaa 1px,transparent 1.4px);background-size:4px 6px"></div><div class="a" style="left:1377px;top:831px;width:4px;height:34px;background-image:radial-gradient(circle,#aaa 1px,transparent 1.4px);background-size:4px 6px"></div><div class="t22" style="left:1392px;top:295px;font-size:23px;letter-spacing:0.5px">Processing Toolbox</div><svg class="a" style="left:1917px;top:299px" width="52" height="22" viewBox="0 0 52 22"><rect x="1" y="1" width="20" height="20" rx="2.5" fill="none" stroke="#6e6e6e" stroke-width="1.6"/><rect x="5" y="9" width="8" height="8" fill="none" stroke="#6e6e6e" stroke-width="1.6"/><path d="M9 9 L9 5 L17 5 L17 13 L13 13" fill="none" stroke="#6e6e6e" stroke-width="1.6"/><rect x="30" y="1" width="20" height="20" rx="2.5" fill="none" stroke="#6e6e6e" stroke-width="1.6"/><path d="M35 6 L45 16 M45 6 L35 16" stroke="#6e6e6e" stroke-width="3.2"/></svg><svg class="a" style="left:1398px;top:340.5px" width="24" height="24" viewBox="0 0 24 24"><polygon points="11.02,2.05 12.98,2.05 13.97,5.49 15.21,6.00 18.34,4.27 19.73,5.66 18.00,8.79 18.51,10.03 21.95,11.02 21.95,12.98 18.51,13.97 18.00,15.21 19.73,18.34 18.34,19.73 15.21,18.00 13.97,18.51 12.98,21.95 11.02,21.95 10.03,18.51 8.79,18.00 5.66,19.73 4.27,18.34 6.00,15.21 5.49,13.97 2.05,12.98 2.05,11.02 5.49,10.03 6.00,8.79 4.27,5.66 5.66,4.27 8.79,6.00 10.03,5.49" fill="#d91a1a" stroke="#c11" stroke-width="1.6" stroke-linejoin="round"/><circle cx="12" cy="12" r="3.0" fill="#fff" stroke="#c11" stroke-width="1.2"/></svg><svg class="a" style="left:1415.5px;top:350.0px" width="19.0" height="19.0" viewBox="0 0 19 19"><polygon points="8.76,2.04 10.24,2.04 10.98,4.62 11.90,5.00 14.26,3.70 15.30,4.74 14.00,7.10 14.38,8.02 16.96,8.76 16.96,10.24 14.38,10.98 14.00,11.90 15.30,14.26 14.26,15.30 11.90,14.00 10.98,14.38 10.24,16.96 8.76,16.96 8.02,14.38 7.10,14.00 4.74,15.30 3.70,14.26 5.00,11.90 4.62,10.98 2.04,10.24 2.04,8.76 4.62,8.02 5.00,7.10 3.70,4.74 4.74,3.70 7.10,5.00 8.02,4.62" fill="#7a7a7a" stroke="#6a6a6a" stroke-width="1.6" stroke-linejoin="round"/><circle cx="9.5" cy="9.5" r="2.2" fill="#fff" stroke="#6a6a6a" stroke-width="1.2"/></svg><svg class="a" style="left:1407px;top:361px" width="16" height="16" viewBox="0 0 16 16"><polygon points="7.41,2.03 8.59,2.03 9.18,4.10 9.92,4.40 11.81,3.36 12.64,4.19 11.60,6.08 11.90,6.82 13.97,7.41 13.97,8.59 11.90,9.18 11.60,9.92 12.64,11.81 11.81,12.64 9.92,11.60 9.18,11.90 8.59,13.97 7.41,13.97 6.82,11.90 6.08,11.60 4.19,12.64 3.36,11.81 4.40,9.92 4.10,9.18 2.03,8.59 2.03,7.41 4.10,6.82 4.40,6.08 3.36,4.19 4.19,3.36 6.08,4.40 6.82,4.10" fill="#9dbbe8" stroke="#7ea3dc" stroke-width="1.6" stroke-linejoin="round"/><circle cx="8" cy="8" r="1.8" fill="#fff" stroke="#7ea3dc" stroke-width="1.2"/></svg><svg class="a" style="left:1422px;top:369px" width="16" height="8" viewBox="0 0 16 8"><path d="M1 1 L15 1 L8 7.5 Z" fill="#555"/></svg><svg class="a" style="left:1452px;top:345px" width="30" height="28" viewBox="0 0 30 28"><path d="M13 1 C7 1 7 4 7 6 V9 H14 V10 H4 C1 10 0 13 0 15 C0 19 2 21 4 21 H7 V17 C7 15 9 13 11 13 H17 C19 13 20 12 20 10 V5 C20 3 18 1 13 1 Z" fill="#3a74b0"/><path d="M15 27 C21 27 21 24 21 22 V19 H14 V18 H24 C27 18 28 15 28 13 C28 9 26 7 24 7 H21 V11 C21 13 19 15 17 15 H11 C9 15 8 16 8 18 V23 C8 25 10 27 15 27 Z" fill="#fdd23e"/><circle cx="10.5" cy="4.5" r="1.3" fill="#fff"/><circle cx="17.5" cy="23.5" r="1.3" fill="#fff"/></svg><svg class="a" style="left:1472px;top:369px" width="16" height="8" viewBox="0 0 16 8"><path d="M1 1 L15 1 L8 7.5 Z" fill="#555"/></svg><svg class="a" style="left:1499.5px;top:342.0px" width="33.0" height="33.0" viewBox="0 0 33 33"><circle cx="16.5" cy="16.5" r="14.5" fill="#eef0ef" stroke="#7d7d7d" stroke-width="2"/><path d="M16.5 6.0600000000000005 L16.5 16.5 L24.475 21.575" stroke="#444" stroke-width="1.8" fill="none"/></svg><svg class="a" style="left:1554px;top:343px" width="24" height="32" viewBox="0 0 24 32"><path d="M2 2 H15 L22 9 V30 H2 Z" fill="#fff" stroke="#888" stroke-width="1.6"/><path d="M15 2 V9 H22" fill="none" stroke="#888" stroke-width="1.4"/><path d="M6 10 H12 M6 15 H18 M6 20 H18 M6 25 H16" stroke="#555" stroke-width="1.5"/></svg><div class="a" style="left:1598px;top:348px;width:2px;height:22px;background:#d0d0d0"></div><svg class="a" style="left:1616px;top:344px" width="32" height="32" viewBox="0 0 32 32"><rect x="1.5" y="1.5" width="18" height="18" fill="#fde54c" stroke="#c9a800" stroke-width="1.5"/><path d="M16 27 L26 9 L30 11 L20 29 L15 31 Z" fill="#f1d549" stroke="#888" stroke-width="1"/></svg><div class="a" style="left:1662px;top:348px;width:2px;height:22px;background:#d0d0d0"></div><svg class="a" style="left:1676px;top:343px" width="36" height="32" viewBox="0 0 36 32"><path d="M4 3 Q1 9 6 12 L28 30 Q33 32 33 27 L11 8 Q12 2 6 1 L9 6 L6 8 Z" fill="#e8d27a" stroke="#333" stroke-width="1.3"/><path d="M4 3 Q1 9 6 12 L13 15 L15 12 L11 8 Q12 2 6 1 L9 6 L6 8 Z" fill="#ccc" stroke="#333" stroke-width="1.3"/><circle cx="29" cy="27" r="1.5" fill="#fff" stroke="#333"/></svg><div class="box" style="left:1384px;top:391px;width:620px;height:48px;border-radius:7px;border-color:#b6b6b6"></div><svg class="a" style="left:1401px;top:402px" width="26" height="26" viewBox="0 0 24 24"><circle cx="9.5" cy="9.5" r="7.5" fill="none" stroke="#8a8a8a" stroke-width="2.4"/><path d="M15 15 L22 22" stroke="#8a8a8a" stroke-width="3" stroke-linecap="round"/></svg><div class="a" style="left:1442px;top:397px;font-size:26px;line-height:36px;color:#111">colo</div><svg class="a" style="left:1928px;top:404px" width="28" height="22" viewBox="0 0 28 22"><path d="M0 11 L8 1 H27 V21 H8 Z" fill="#8a8a8a"/><path d="M12 5 L22 17 M22 5 L12 17" stroke="#fff" stroke-width="2.6"/></svg><div class="box" style="left:1384px;top:439px;width:620px;height:962px;border-color:#b3b3b3"></div><div class="a" style="left:1386px;top:585px;width:556px;height:36px;background:#1a6fdd"></div><div class="a" style="left:1386px;top:441px;width:556px;height:958px;overflow:hidden"><svg class="a" style="left:15px;top:10px" width="10" height="16" viewBox="0 0 10 16"><path d="M1 0 L9 8 L1 16 Z" fill="#5b5b5b"/></svg><svg class="a" style="left:45.5px;top:1.5px" width="33.0" height="33.0" viewBox="0 0 33 33"><circle cx="16.5" cy="16.5" r="14.5" fill="#eef0ef" stroke="#7d7d7d" stroke-width="2"/><path d="M16.5 6.0600000000000005 L16.5 16.5 L24.475 21.575" stroke="#444" stroke-width="1.8" fill="none"/></svg><div class="t26" style="left:91px;top:0px;">Recently used</div><svg class="a" style="left:12.5px;top:49px" width="16" height="10" viewBox="0 0 16 10"><path d="M0 1 L16 1 L8 9 Z" fill="#5b5b5b"/></svg><svg class="a" style="left:47px;top:39px" width="31" height="31" viewBox="0 0 31 31"><defs><linearGradient id="qg" x1="0" y1="0" x2="0" y2="1"><stop offset="0" stop-color="#8db020"/><stop offset="1" stop-color="#4e982e"/></linearGradient></defs><path d="M19.65 24.77 A11 11 0 1 1 24.97 19.45" fill="none" stroke="url(#qg)" stroke-width="5.8"/><path d="M18.5 18 L22 16 L29 23 L29 28 L24.5 28 L17.5 21.5 Z" fill="#5d9d36"/><path d="M21 16.8 L22 16 L29 23 L29 25 Z" fill="#7fb35a"/><path d="M15.5 15.5 L19.8 15 L22 16.5 L18.5 20 L16 18 Z" fill="#f2ec4a"/><path d="M12.5 12.3 L16.8 12.3 L20 15.2 L16 19 L12.5 15.8 Z" fill="#ee7a1c"/></svg><div class="t26" style="left:91px;top:36px;">Cartography</div><svg class="a" style="left:86px;top:74px" width="32" height="32" viewBox="0 0 32 32"><polygon points="14.63,2.07 17.37,2.07 18.76,6.89 20.49,7.60 24.88,5.18 26.82,7.12 24.40,11.51 25.11,13.24 29.93,14.63 29.93,17.37 25.11,18.76 24.40,20.49 26.82,24.88 24.88,26.82 20.49,24.40 18.76,25.11 17.37,29.93 14.63,29.93 13.24,25.11 11.51,24.40 7.12,26.82 5.18,24.88 7.60,20.49 6.89,18.76 2.07,17.37 2.07,14.63 6.89,13.24 7.60,11.51 5.18,7.12 7.12,5.18 11.51,7.60 13.24,6.89" fill="#8fb0dd" stroke="#3d74c6" stroke-width="1.6" stroke-linejoin="round"/><circle cx="16" cy="16" r="4.2" fill="#fff" stroke="#3d74c6" stroke-width="1.2"/></svg><div class="t26" style="left:131px;top:72px;">Combine style databases</div><svg class="a" style="left:86px;top:110px" width="32" height="32" viewBox="0 0 32 32"><polygon points="14.63,2.07 17.37,2.07 18.76,6.89 20.49,7.60 24.88,5.18 26.82,7.12 24.40,11.51 25.11,13.24 29.93,14.63 29.93,17.37 25.11,18.76 24.40,20.49 26.82,24.88 24.88,26.82 20.49,24.40 18.76,25.11 17.37,29.93 14.63,29.93 13.24,25.11 11.51,24.40 7.12,26.82 5.18,24.88 7.60,20.49 6.89,18.76 2.07,17.37 2.07,14.63 6.89,13.24 7.60,11.51 5.18,7.12 7.12,5.18 11.51,7.60 13.24,6.89" fill="#8fb0dd" stroke="#3d74c6" stroke-width="1.6" stroke-linejoin="round"/><circle cx="16" cy="16" r="4.2" fill="#fff" stroke="#3d74c6" stroke-width="1.2"/></svg><div class="t26" style="left:131px;top:108px;">Create style database from project</div><svg class="a" style="left:86px;top:146px" width="32" height="32" viewBox="0 0 32 32"><polygon points="14.63,2.07 17.37,2.07 18.76,6.89 20.49,7.60 24.88,5.18 26.82,7.12 24.40,11.51 25.11,13.24 29.93,14.63 29.93,17.37 25.11,18.76 24.40,20.49 26.82,24.88 24.88,26.82 20.49,24.40 18.76,25.11 17.37,29.93 14.63,29.93 13.24,25.11 11.51,24.40 7.12,26.82 5.18,24.88 7.60,20.49 6.89,18.76 2.07,17.37 2.07,14.63 6.89,13.24 7.60,11.51 5.18,7.12 7.12,5.18 11.51,7.60 13.24,6.89" fill="#9fb6d8" stroke="#8aa3c8" stroke-width="1.6" stroke-linejoin="round"/><circle cx="16" cy="16" r="4.2" fill="#1a6fdd" stroke="#8aa3c8" stroke-width="1.2"/></svg><div class="t26" style="left:131px;top:144px;color:#fff;">Topological coloring</div><svg class="a" style="left:12.5px;top:193px" width="16" height="10" viewBox="0 0 16 10"><path d="M0 1 L16 1 L8 9 Z" fill="#5b5b5b"/></svg><svg class="a" style="left:46px;top:182px" width="31" height="34" viewBox="0 0 31 34"><circle cx="17.9" cy="19.9" r="12" fill="#6cc8f2"/><path d="M10 12 Q14 9 19 10 Q24 12 22 16 Q19 20 16 21 Q12 20 11 16 Z" fill="#35a046"/><path d="M21 24 Q26 23 27 26 Q25 30 22 31 Z" fill="#35a046"/><path d="M0.2 11 L15.3 0.9" stroke="#7a7a7a" stroke-width="3.4"/><ellipse cx="7.5" cy="5.8" rx="2.4" ry="2.8" fill="#111" transform="rotate(-35 7.5 5.8)"/><path d="M10.6 11 V20 M10.6 11 L18.9 14.4 L10.6 18" stroke="#dd3333" stroke-width="1.1" fill="none"/><text x="0" y="32" font-family="Liberation Sans" font-weight="bold" font-size="16" fill="#000" textLength="29" lengthAdjust="spacingAndGlyphs">GDAL</text></svg><div class="t26" style="left:91px;top:180px;">GDAL</div><svg class="a" style="left:52.5px;top:227px" width="16" height="10" viewBox="0 0 16 10"><path d="M0 1 L16 1 L8 9 Z" fill="#5b5b5b"/></svg><div class="t26" style="left:87px;top:214px;">Raster analysis</div><svg class="a" style="left:126px;top:250px" width="31" height="34" viewBox="0 0 31 34"><circle cx="17.9" cy="19.9" r="12" fill="#6cc8f2"/><path d="M10 12 Q14 9 19 10 Q24 12 22 16 Q19 20 16 21 Q12 20 11 16 Z" fill="#35a046"/><path d="M21 24 Q26 23 27 26 Q25 30 22 31 Z" fill="#35a046"/><path d="M0.2 11 L15.3 0.9" stroke="#7a7a7a" stroke-width="3.4"/><ellipse cx="7.5" cy="5.8" rx="2.4" ry="2.8" fill="#111" transform="rotate(-35 7.5 5.8)"/><path d="M10.6 11 V20 M10.6 11 L18.9 14.4 L10.6 18" stroke="#dd3333" stroke-width="1.1" fill="none"/><text x="0" y="32" font-family="Liberation Sans" font-weight="bold" font-size="16" fill="#000" textLength="29" lengthAdjust="spacingAndGlyphs">GDAL</text></svg><div class="t26" style="left:171px;top:248px;">Color relief</div><svg class="a" style="left:12.5px;top:297px" width="16" height="10" viewBox="0 0 16 10"><path d="M0 1 L16 1 L8 9 Z" fill="#5b5b5b"/></svg><svg class="a" style="left:47px;top:285px" width="30" height="32" viewBox="0 0 30 32"><path d="M15 2.9 L27.2 13.8 L15.3 24.9 L3.1 13.8 Z" fill="#fff" stroke="#111" stroke-width="1.4"/><path d="M3.2 17.1 L15.3 29.2 L27.2 17.1" fill="none" stroke="#111" stroke-width="2.2"/><path d="M4 28.7 H26.8" stroke="#111" stroke-width="1.3"/><path d="M15 23.3 Q14 14 15 4.8 M15 23.3 Q18 15 21.8 9.8 M15 23.3 Q12 17 8.4 11 M14.5 23 Q11 19 9.5 15 M15.5 23 Q19 19 20.5 16.5 M15 23 Q15 16 13 11" stroke="#189418" stroke-width="1.3" fill="none"/></svg><div class="t26" style="left:91px;top:284px;">GRASS</div><svg class="a" style="left:52.5px;top:331px" width="16" height="10" viewBox="0 0 16 10"><path d="M0 1 L16 1 L8 9 Z" fill="#5b5b5b"/></svg><div class="t26" style="left:87px;top:318px;">Imagery (i.*)</div><svg class="a" style="left:127px;top:353px" width="30" height="32" viewBox="0 0 30 32"><path d="M15 2.9 L27.2 13.8 L15.3 24.9 L3.1 13.8 Z" fill="#fff" stroke="#111" stroke-width="1.4"/><path d="M3.2 17.1 L15.3 29.2 L27.2 17.1" fill="none" stroke="#111" stroke-width="2.2"/><path d="M4 28.7 H26.8" stroke="#111" stroke-width="1.3"/><path d="M15 23.3 Q14 14 15 4.8 M15 23.3 Q18 15 21.8 9.8 M15 23.3 Q12 17 8.4 11 M14.5 23 Q11 19 9.5 15 M15.5 23 Q19 19 20.5 16.5 M15 23 Q15 16 13 11" stroke="#189418" stroke-width="1.3" fill="none"/></svg><div class="t26" style="left:171px;top:352px;">i.colors.enhance</div><svg class="a" style="left:127px;top:389px" width="30" height="32" viewBox="0 0 30 32"><path d="M15 2.9 L27.2 13.8 L15.3 24.9 L3.1 13.8 Z" fill="#fff" stroke="#111" stroke-width="1.4"/><path d="M3.2 17.1 L15.3 29.2 L27.2 17.1" fill="none" stroke="#111" stroke-width="2.2"/><path d="M4 28.7 H26.8" stroke="#111" stroke-width="1.3"/><path d="M15 23.3 Q14 14 15 4.8 M15 23.3 Q18 15 21.8 9.8 M15 23.3 Q12 17 8.4 11 M14.5 23 Q11 19 9.5 15 M15.5 23 Q19 19 20.5 16.5 M15 23 Q15 16 13 11" stroke="#189418" stroke-width="1.3" fill="none"/></svg><div class="t26" style="left:171px;top:388px;">i.his.rgb</div><svg class="a" style="left:127px;top:425px" width="30" height="32" viewBox="0 0 30 32"><path d="M15 2.9 L27.2 13.8 L15.3 24.9 L3.1 13.8 Z" fill="#fff" stroke="#111" stroke-width="1.4"/><path d="M3.2 17.1 L15.3 29.2 L27.2 17.1" fill="none" stroke="#111" stroke-width="2.2"/><path d="M4 28.7 H26.8" stroke="#111" stroke-width="1.3"/><path d="M15 23.3 Q14 14 15 4.8 M15 23.3 Q18 15 21.8 9.8 M15 23.3 Q12 17 8.4 11 M14.5 23 Q11 19 9.5 15 M15.5 23 Q19 19 20.5 16.5 M15 23 Q15 16 13 11" stroke="#189418" stroke-width="1.3" fill="none"/></svg><div class="t26" style="left:171px;top:424px;">i.image.mosaic</div><svg class="a" style="left:127px;top:461px" width="30" height="32" viewBox="0 0 30 32"><path d="M15 2.9 L27.2 13.8 L15.3 24.9 L3.1 13.8 Z" fill="#fff" stroke="#111" stroke-width="1.4"/><path d="M3.2 17.1 L15.3 29.2 L27.2 17.1" fill="none" stroke="#111" stroke-width="2.2"/><path d="M4 28.7 H26.8" stroke="#111" stroke-width="1.3"/><path d="M15 23.3 Q14 14 15 4.8 M15 23.3 Q18 15 21.8 9.8 M15 23.3 Q12 17 8.4 11 M14.5 23 Q11 19 9.5 15 M15.5 23 Q19 19 20.5 16.5 M15 23 Q15 16 13 11" stroke="#189418" stroke-width="1.3" fill="none"/></svg><div class="t26" style="left:171px;top:460px;">i.rgb.his</div><svg class="a" style="left:52.5px;top:507px" width="16" height="10" viewBox="0 0 16 10"><path d="M0 1 L16 1 L8 9 Z" fill="#5b5b5b"/></svg><div class="t26" style="left:87px;top:494px;">Raster (r.*)</div><svg class="a" style="left:127px;top:529px" width="30" height="32" viewBox="0 0 30 32"><path d="M15 2.9 L27.2 13.8 L15.3 24.9 L3.1 13.8 Z" fill="#fff" stroke="#111" stroke-width="1.4"/><path d="M3.2 17.1 L15.3 29.2 L27.2 17.1" fill="none" stroke="#111" stroke-width="2.2"/><path d="M4 28.7 H26.8" stroke="#111" stroke-width="1.3"/><path d="M15 23.3 Q14 14 15 4.8 M15 23.3 Q18 15 21.8 9.8 M15 23.3 Q12 17 8.4 11 M14.5 23 Q11 19 9.5 15 M15.5 23 Q19 19 20.5 16.5 M15 23 Q15 16 13 11" stroke="#189418" stroke-width="1.3" fill="none"/></svg><div class="t26" style="left:171px;top:528px;">r.blend.combine</div><svg class="a" style="left:127px;top:565px" width="30" height="32" viewBox="0 0 30 32"><path d="M15 2.9 L27.2 13.8 L15.3 24.9 L3.1 13.8 Z" fill="#fff" stroke="#111" stroke-width="1.4"/><path d="M3.2 17.1 L15.3 29.2 L27.2 17.1" fill="none" stroke="#111" stroke-width="2.2"/><path d="M4 28.7 H26.8" stroke="#111" stroke-width="1.3"/><path d="M15 23.3 Q14 14 15 4.8 M15 23.3 Q18 15 21.8 9.8 M15 23.3 Q12 17 8.4 11 M14.5 23 Q11 19 9.5 15 M15.5 23 Q19 19 20.5 16.5 M15 23 Q15 16 13 11" stroke="#189418" stroke-width="1.3" fill="none"/></svg><div class="t26" style="left:171px;top:564px;">r.blend.rgb</div><svg class="a" style="left:127px;top:601px" width="30" height="32" viewBox="0 0 30 32"><path d="M15 2.9 L27.2 13.8 L15.3 24.9 L3.1 13.8 Z" fill="#fff" stroke="#111" stroke-width="1.4"/><path d="M3.2 17.1 L15.3 29.2 L27.2 17.1" fill="none" stroke="#111" stroke-width="2.2"/><path d="M4 28.7 H26.8" stroke="#111" stroke-width="1.3"/><path d="M15 23.3 Q14 14 15 4.8 M15 23.3 Q18 15 21.8 9.8 M15 23.3 Q12 17 8.4 11 M14.5 23 Q11 19 9.5 15 M15.5 23 Q19 19 20.5 16.5 M15 23 Q15 16 13 11" stroke="#189418" stroke-width="1.3" fill="none"/></svg><div class="t26" style="left:171px;top:600px;">r.colors</div><svg class="a" style="left:127px;top:637px" width="30" height="32" viewBox="0 0 30 32"><path d="M15 2.9 L27.2 13.8 L15.3 24.9 L3.1 13.8 Z" fill="#fff" stroke="#111" stroke-width="1.4"/><path d="M3.2 17.1 L15.3 29.2 L27.2 17.1" fill="none" stroke="#111" stroke-width="2.2"/><path d="M4 28.7 H26.8" stroke="#111" stroke-width="1.3"/><path d="M15 23.3 Q14 14 15 4.8 M15 23.3 Q18 15 21.8 9.8 M15 23.3 Q12 17 8.4 11 M14.5 23 Q11 19 9.5 15 M15.5 23 Q19 19 20.5 16.5 M15 23 Q15 16 13 11" stroke="#189418" stroke-width="1.3" fill="none"/></svg><div class="t26" style="left:171px;top:636px;">r.colors.out</div><svg class="a" style="left:127px;top:673px" width="30" height="32" viewBox="0 0 30 32"><path d="M15 2.9 L27.2 13.8 L15.3 24.9 L3.1 13.8 Z" fill="#fff" stroke="#111" stroke-width="1.4"/><path d="M3.2 17.1 L15.3 29.2 L27.2 17.1" fill="none" stroke="#111" stroke-width="2.2"/><path d="M4 28.7 H26.8" stroke="#111" stroke-width="1.3"/><path d="M15 23.3 Q14 14 15 4.8 M15 23.3 Q18 15 21.8 9.8 M15 23.3 Q12 17 8.4 11 M14.5 23 Q11 19 9.5 15 M15.5 23 Q19 19 20.5 16.5 M15 23 Q15 16 13 11" stroke="#189418" stroke-width="1.3" fill="none"/></svg><div class="t26" style="left:171px;top:672px;">r.colors.stddev</div><svg class="a" style="left:127px;top:709px" width="30" height="32" viewBox="0 0 30 32"><path d="M15 2.9 L27.2 13.8 L15.3 24.9 L3.1 13.8 Z" fill="#fff" stroke="#111" stroke-width="1.4"/><path d="M3.2 17.1 L15.3 29.2 L27.2 17.1" fill="none" stroke="#111" stroke-width="2.2"/><path d="M4 28.7 H26.8" stroke="#111" stroke-width="1.3"/><path d="M15 23.3 Q14 14 15 4.8 M15 23.3 Q18 15 21.8 9.8 M15 23.3 Q12 17 8.4 11 M14.5 23 Q11 19 9.5 15 M15.5 23 Q19 19 20.5 16.5 M15 23 Q15 16 13 11" stroke="#189418" stroke-width="1.3" fill="none"/></svg><div class="t26" style="left:171px;top:708px;">r.shade</div><svg class="a" style="left:127px;top:745px" width="30" height="32" viewBox="0 0 30 32"><path d="M15 2.9 L27.2 13.8 L15.3 24.9 L3.1 13.8 Z" fill="#fff" stroke="#111" stroke-width="1.4"/><path d="M3.2 17.1 L15.3 29.2 L27.2 17.1" fill="none" stroke="#111" stroke-width="2.2"/><path d="M4 28.7 H26.8" stroke="#111" stroke-width="1.3"/><path d="M15 23.3 Q14 14 15 4.8 M15 23.3 Q18 15 21.8 9.8 M15 23.3 Q12 17 8.4 11 M14.5 23 Q11 19 9.5 15 M15.5 23 Q19 19 20.5 16.5 M15 23 Q15 16 13 11" stroke="#189418" stroke-width="1.3" fill="none"/></svg><div class="t26" style="left:171px;top:744px;">r.what.color</div><svg class="a" style="left:12.5px;top:793px" width="16" height="10" viewBox="0 0 16 10"><path d="M0 1 L16 1 L8 9 Z" fill="#5b5b5b"/></svg><svg class="a" style="left:46.5px;top:782.5px" width="31" height="31" viewBox="0 0 31 31"><path d="M28 15.7 A13.5 13.5 0 1 1 23.2 5.4" fill="none" stroke="#0d4f96" stroke-width="3"/><path d="M23.4 2.2 L25.8 8 L18.5 6.8 Z" fill="#0d4f96"/><path d="M8.7 17.3 H29.5" stroke="#0d4f96" stroke-width="3"/><path d="M2.9 12 L18 27.4" stroke="#0d4f96" stroke-width="3"/><path d="M8 14.3 L13.8 8 L22 16.6" fill="none" stroke="#0d4f96" stroke-width="2.6"/><path d="M12.7 19 L19.6 26.4" stroke="#0d4f96" stroke-width="2.6"/></svg><div class="t26" style="left:91px;top:780px;">SAGA Next Gen</div><svg class="a" style="left:52.5px;top:827px" width="16" height="10" viewBox="0 0 16 10"><path d="M0 1 L16 1 L8 9 Z" fill="#5b5b5b"/></svg><div class="t26" style="left:87px;top:814px;">I/O</div><svg class="a" style="left:126.5px;top:850.5px" width="31" height="31" viewBox="0 0 31 31"><path d="M28 15.7 A13.5 13.5 0 1 1 23.2 5.4" fill="none" stroke="#0d4f96" stroke-width="3"/><path d="M23.4 2.2 L25.8 8 L18.5 6.8 Z" fill="#0d4f96"/><path d="M8.7 17.3 H29.5" stroke="#0d4f96" stroke-width="3"/><path d="M2.9 12 L18 27.4" stroke="#0d4f96" stroke-width="3"/><path d="M8 14.3 L13.8 8 L22 16.6" fill="none" stroke="#0d4f96" stroke-width="2.6"/><path d="M12.7 19 L19.6 26.4" stroke="#0d4f96" stroke-width="2.6"/></svg><div class="t26" style="left:171px;top:848px;">Export true color bitmap</div><svg class="a" style="left:52.5px;top:895px" width="16" height="10" viewBox="0 0 16 10"><path d="M0 1 L16 1 L8 9 Z" fill="#5b5b5b"/></svg><div class="t26" style="left:87px;top:882px;">Image analysis</div><svg class="a" style="left:126.5px;top:918.5px" width="31" height="31" viewBox="0 0 31 31"><path d="M28 15.7 A13.5 13.5 0 1 1 23.2 5.4" fill="none" stroke="#0d4f96" stroke-width="3"/><path d="M23.4 2.2 L25.8 8 L18.5 6.8 Z" fill="#0d4f96"/><path d="M8.7 17.3 H29.5" stroke="#0d4f96" stroke-width="3"/><path d="M2.9 12 L18 27.4" stroke="#0d4f96" stroke-width="3"/><path d="M8 14.3 L13.8 8 L22 16.6" fill="none" stroke="#0d4f96" stroke-width="2.6"/><path d="M12.7 19 L19.6 26.4" stroke="#0d4f96" stroke-width="2.6"/></svg><div class="t26" style="left:171px;top:916px;">Colour normalized brovey sh...</div><svg class="a" style="left:126.5px;top:954.5px" width="31" height="31" viewBox="0 0 31 31"><path d="M28 15.7 A13.5 13.5 0 1 1 23.2 5.4" fill="none" stroke="#0d4f96" stroke-width="3"/><path d="M23.4 2.2 L25.8 8 L18.5 6.8 Z" fill="#0d4f96"/><path d="M8.7 17.3 H29.5" stroke="#0d4f96" stroke-width="3"/><path d="M2.9 12 L18 27.4" stroke="#0d4f96" stroke-width="3"/><path d="M8 14.3 L13.8 8 L22 16.6" fill="none" stroke="#0d4f96" stroke-width="2.6"/><path d="M12.7 19 L19.6 26.4" stroke="#0d4f96" stroke-width="2.6"/></svg></div><div class="a" style="left:1942px;top:441px;width:27px;height:958px;background:#ececec;border-left:1px solid #c9c9c9"></div><div class="sb" style="left:1943px;top:441px;width:26px;height:26px;border-bottom:2px solid #c4c4c4"></div><svg class="a" style="left:1948px;top:449px" width="16" height="10" viewBox="0 0 16 10"><path d="M0 9 L16 9 L8 1 Z" fill="#5b5b5b"/></svg><div class="sb" style="left:1943px;top:1337px;width:26px;height:33px;border-top:2px solid #c4c4c4;border-bottom:2px solid #c4c4c4;background:#e2e2e2"></div><div class="sb" style="left:1943px;top:1370px;width:26px;height:29px"></div><svg class="a" style="left:1948px;top:1379px" width="16" height="10" viewBox="0 0 16 10"><path d="M0 1 L16 1 L8 9 Z" fill="#5b5b5b"/></svg><div class="a" style="left:1791px;top:655px;width:200px;height:116px;background:#fdfdfd;border:2px solid #1f1f1f;box-shadow:0 6px 18px rgba(0,0,0,0.25)"></div><div class="a" style="left:1799px;top:660px;font-size:22px;font-weight:bold;line-height:28px;color:#1a1a1a;white-space:nowrap;letter-spacing:0.3px">Topological colo</div><div class="a" style="left:1799px;top:710px;font-size:22px;line-height:28px;color:#1a1a1a;white-space:nowrap;letter-spacing:0.6px">Algorithm ID:</div><div class="a" style="left:1799px;top:736px;font-size:22px;font-style:italic;line-height:28px;color:#1a1a1a;white-space:nowrap;letter-spacing:0.9px">' qgis:topological</div><div class="a" style="left:0;top:1399px;width:1969px;height:1px;background:#c8c8c8"></div><div class="a" style="left:9px;top:1408px;width:426px;height:46px;background:#fff;border:2px solid #b0b0b0;border-radius:5px"></div><svg class="a" style="left:26px;top:1419px" width="24" height="24" viewBox="0 0 24 24"><circle cx="9.5" cy="9.5" r="7.5" fill="none" stroke="#888" stroke-width="2.4"/><path d="M15 15 L22 22" stroke="#888" stroke-width="3" stroke-linecap="round"/></svg><div class="a" style="left:67px;top:1413px;font-size:26px;line-height:36px;color:#7f7f7f;white-space:nowrap;letter-spacing:0.3px">Type to locate (⌘K)</div><div class="a" style="left:495px;top:1417px;width:48px;height:30px;overflow:hidden;font-size:22px;line-height:30px;color:#222;white-space:nowrap"><span style="position:absolute;right:0;top:0">coordin</span></div><div class="a" style="left:549px;top:1410px;width:178px;height:42px;background:#fff;border:2px solid #b6b6b6;border-radius:5px"></div><div class="a" style="left:563px;top:1417px;font-size:22px;line-height:30px;color:#222;white-space:nowrap;letter-spacing:1px">25.45°,97.84°</div><svg class="a" style="left:735px;top:1413px" width="34" height="36" viewBox="0 0 34 36"><circle cx="21.5" cy="26" r="8.5" fill="#c4b8b8"/><path d="M13 8 L25 20" stroke="#c4b8b8" stroke-width="6"/><path d="M7.5 18.5 L12 28.5 M20.5 15.5 L27 21" stroke="#000" stroke-width="2.4"/><path d="M9 19 L13 27 L26 21 L20 15 Z" fill="#fff"/><circle cx="19.5" cy="25.5" r="8" fill="#fff" stroke="#000" stroke-width="2.6"/><circle cx="19.5" cy="25.5" r="2.5" fill="none" stroke="#000" stroke-width="1.8"/><g transform="rotate(-38 11.5 10)"><rect x="6" y="1" width="11.5" height="18" rx="5.7" fill="#fff" stroke="#000" stroke-width="2.6"/><ellipse cx="11.7" cy="7.5" rx="1.7" ry="4.2" fill="#3a2a2a"/></g><circle cx="29.2" cy="4.2" r="1.1" fill="#000"/><circle cx="25.5" cy="7.8" r="1" fill="#000"/><circle cx="21.8" cy="8.5" r="1" fill="#000"/><circle cx="5.3" cy="19.7" r="1" fill="#000"/><circle cx="2.5" cy="22.7" r="1.1" fill="#000"/></svg><div class="a" style="left:794px;top:1417px;width:9px;height:30px;overflow:hidden;font-size:22px;line-height:30px;color:#222;white-space:nowrap"><span style="position:absolute;right:0;top:0">Sca</span></div><div class="a" style="left:808px;top:1408px;width:185px;height:46px;background:#fff;border:2px solid #b6b6b6;border-radius:5px"></div><div class="a" style="left:952px;top:1410px;width:39px;height:42px;background:linear-gradient(#fafafa,#f0f0f0);border-left:1.5px solid #c9c9c9;border-radius:0 4px 4px 0"></div><svg class="a" style="left:962px;top:1427px" width="16" height="8" viewBox="0 0 16 8"><path d="M1 1 L15 1 L8 7.5 Z" fill="#555"/></svg><div class="a" style="left:816px;top:1417px;font-size:22px;line-height:30px;color:#222;white-space:nowrap;letter-spacing:0.3px">1:31848730</div><svg class="a" style="left:1017px;top:1416px" width="26" height="32" viewBox="0 0 26 32"><path d="M6 14 V9 Q6 2 13 2 Q20 2 20 9 V14" fill="none" stroke="#6b6b6b" stroke-width="3"/><path d="M8 14 V9 Q8 5 13 5 Q18 5 18 9 V14" fill="none" stroke="#ddd" stroke-width="1"/><rect x="1" y="14" width="24" height="16" rx="3" fill="#666"/></svg><div class="a" style="left:1059px;top:1417px;width:29px;height:30px;overflow:hidden;font-size:22px;line-height:30px;color:#222;white-space:nowrap"><span style="position:absolute;right:0;top:0">Magni</span></div><div class="a" style="left:1094px;top:1409px;width:186px;height:45px;background:#fff;border:2px solid #b6b6b6;border-radius:5px"></div><div class="a" style="left:1249px;top:1411px;width:29px;height:41px;background:linear-gradient(#fafafa,#f0f0f0);border-left:1.5px solid #c9c9c9;border-radius:0 4px 4px 0"></div><svg class="a" style="left:1256px;top:1418px" width="16" height="10" viewBox="0 0 16 10"><path d="M0 9 L16 9 L8 1 Z" fill="#5b5b5b"/></svg><svg class="a" style="left:1256px;top:1436px" width="16" height="10" viewBox="0 0 16 10"><path d="M0 1 L16 1 L8 9 Z" fill="#5b5b5b"/></svg><div class="a" style="left:1105px;top:1417px;font-size:22px;line-height:30px;color:#222;white-space:nowrap">100%</div><div class="a" style="left:1334px;top:1409px;width:185px;height:45px;background:#fff;border:2px solid #b6b6b6;border-radius:5px"></div><div class="a" style="left:1488px;top:1411px;width:29px;height:41px;background:linear-gradient(#fafafa,#f0f0f0);border-left:1.5px solid #c9c9c9;border-radius:0 4px 4px 0"></div><svg class="a" style="left:1495px;top:1418px" width="16" height="10" viewBox="0 0 16 10"><path d="M0 9 L16 9 L8 1 Z" fill="#5b5b5b"/></svg><svg class="a" style="left:1495px;top:1436px" width="16" height="10" viewBox="0 0 16 10"><path d="M0 1 L16 1 L8 9 Z" fill="#5b5b5b"/></svg><div class="a" style="left:1345px;top:1417px;font-size:22px;line-height:30px;color:#222;white-space:nowrap">0.0 °</div><div class="a" style="left:1297px;top:1417px;font-size:22px;line-height:30px;color:#222;white-space:nowrap">at</div><div class="a" style="left:1532px;top:1417px;width:28px;height:28px;background:#fff;border:1.5px solid #b9b9b9"></div><svg class="a" style="left:1536px;top:1420px" width="20" height="24" viewBox="0 0 20 24"><path d="M3 12 L8 20 L17 3" fill="none" stroke="#222" stroke-width="3"/></svg><div class="a" style="left:1571px;top:1417px;font-size:22px;line-height:30px;color:#222;white-space:nowrap">Render</div><svg class="a" style="left:1675px;top:1416px" width="34" height="30" viewBox="0 0 34 30"><ellipse cx="17" cy="15" rx="14" ry="13" fill="none" stroke="#777" stroke-width="2"/><ellipse cx="17" cy="15" rx="6" ry="13" fill="none" stroke="#777" stroke-width="2"/><path d="M3 11 H31 M3 19 H31 M17 2 V28" stroke="#777" stroke-width="2"/></svg><div class="a" style="left:1712px;top:1417px;font-size:22px;line-height:30px;color:#222;white-space:nowrap;letter-spacing:0.3px">EPSG:4326</div><svg class="a" style="left:1879px;top:1416px" width="34" height="32" viewBox="0 0 34 32"><ellipse cx="16" cy="13" rx="15.5" ry="12.5" fill="#6b6b6b"/><path d="M20 22 Q24 28 30 29 Q22 30 14 24 Z" fill="#6b6b6b"/><circle cx="9" cy="13" r="2.5" fill="#fff"/><circle cx="16" cy="13" r="2.5" fill="#fff"/><circle cx="23" cy="13" r="2.5" fill="#fff"/></svg><div class="a" style="left:1945px;top:1436px;width:22px;height:22px;background-image:radial-gradient(circle,#aaa 1px,transparent 1.4px);background-size:6px 6px;clip-path:polygon(100% 0,100% 100%,0 100%)"></div><div class="a" style="left:0;top:0;width:1969px;height:1px;background:linear-gradient(90deg,#a03aa0,#b890b8)"></div></div></body></html>
